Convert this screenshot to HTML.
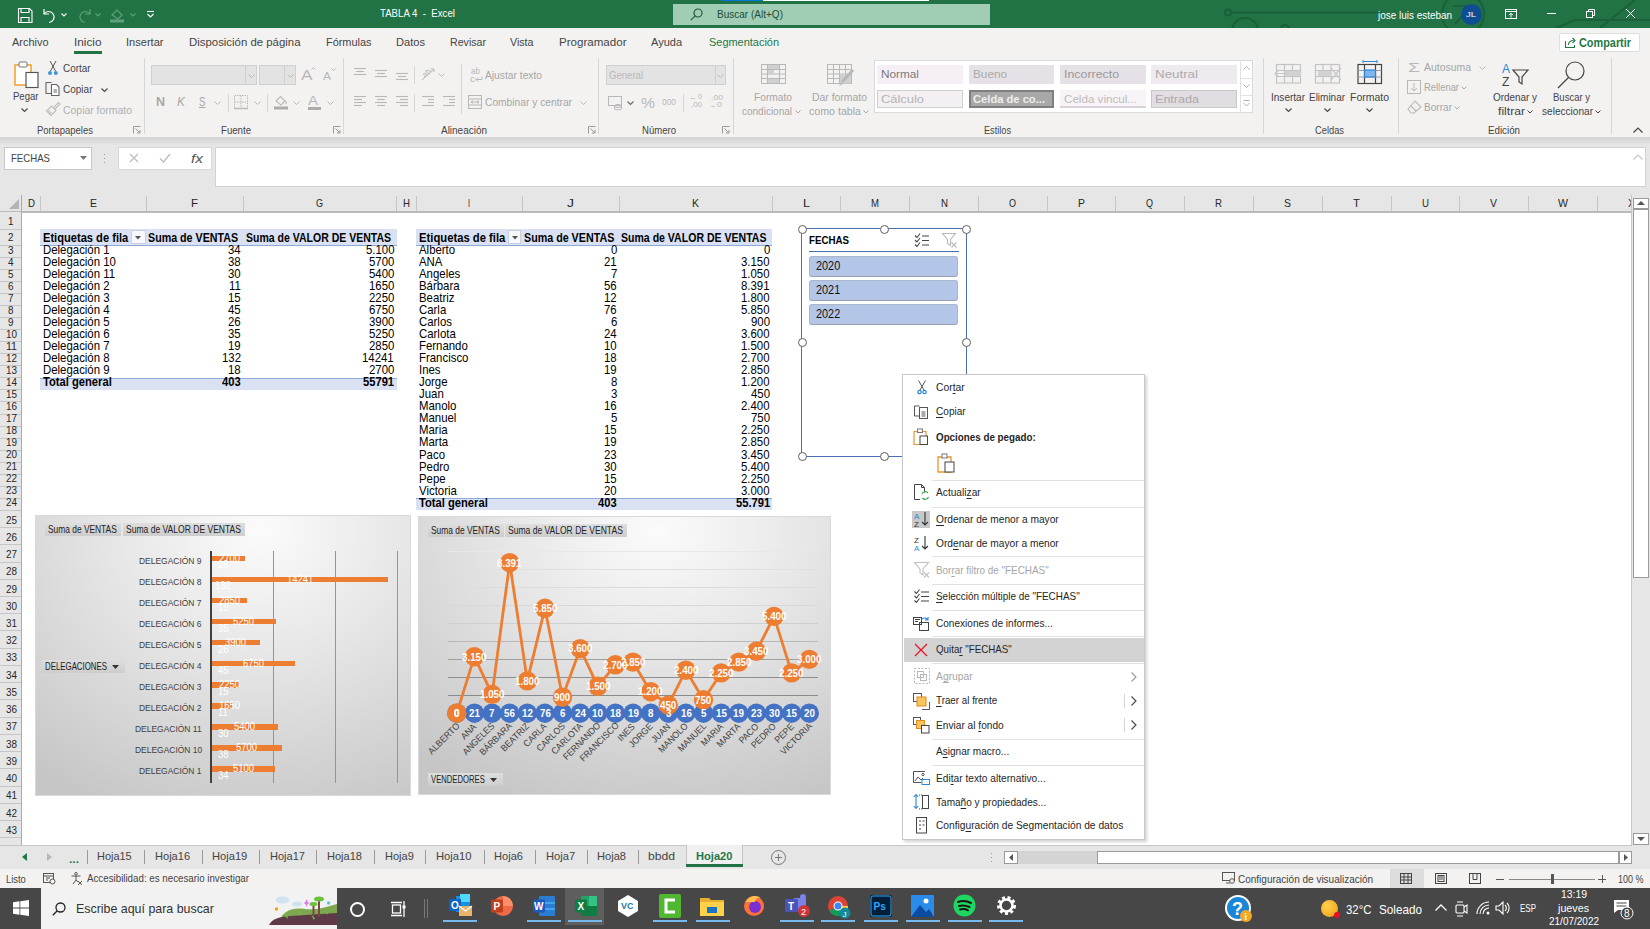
<!DOCTYPE html>
<html><head><meta charset="utf-8">
<style>
*{margin:0;padding:0;box-sizing:border-box}
html,body{width:1650px;height:929px;overflow:hidden;background:#fff;font-family:"Liberation Sans",sans-serif;color:#262626}
.a{position:absolute}
.t{position:absolute;white-space:nowrap;line-height:1}
svg{overflow:visible}
</style></head><body>
<div class="a" style="left:0.0px;top:0.0px;width:1650.0px;height:28.0px;background:#217346"></div>
<svg class="a" style="left:1150px;top:0px;" width="500" height="28" viewBox="0 0 500 28"><g stroke="#1a6139" stroke-width="2.2" fill="none"><line x1="81" y1="12.5" x2="232" y2="12.5"/><circle cx="78" cy="12.5" r="3"/><circle cx="95" cy="31" r="13"/><circle cx="135" cy="29" r="4"/><circle cx="313" cy="14" r="21"/><path d="M303 6h18l-16 18"/><path d="M406 28L425 20H500"/><path d="M450 28L485 0"/></g></svg>
<svg class="a" style="left:18px;top:8px;" width="15" height="15" viewBox="0 0 15 15"><g fill="none" stroke="#fff" stroke-width="1.1"><path d="M0.5 0.5h11l2.5 2.5v11.5h-13.5z"/><path d="M3 0.5v4h8v-4"/><path d="M3 14.5v-5h8v5"/></g></svg>
<svg class="a" style="left:43px;top:8px;" width="14" height="15" viewBox="0 0 14 15"><g fill="none" stroke="#fff" stroke-width="1.2"><path d="M1 6 A5.5 5.5 0 1 1 6 14.5"/><path d="M1 1v5h5"/></g></svg>
<svg class="a" style="left:61px;top:13px;" width="6" height="4" viewBox="0 0 6 4"><path d="M0.5 0.5L3 3L5.5 0.5" fill="none" stroke="#fff" stroke-width="1.1"/></svg>
<svg class="a" style="left:77px;top:8px;" width="14" height="15" viewBox="0 0 14 15"><g fill="none" stroke="#5ea17b" stroke-width="1.2"><path d="M13 6 A5.5 5.5 0 1 0 8 14.5"/><path d="M13 1v5h-5"/></g></svg>
<svg class="a" style="left:95px;top:13px;" width="6" height="4" viewBox="0 0 6 4"><path d="M0.5 0.5L3 3L5.5 0.5" fill="none" stroke="#5ea17b" stroke-width="1.1"/></svg>
<svg class="a" style="left:110px;top:8px;" width="14" height="15" viewBox="0 0 14 15"><g fill="none" stroke="#5ea17b" stroke-width="1.2"><path d="M2 7l5-5 5 5-4 4z"/></g><rect x="0" y="11.5" width="14" height="3" fill="#5ea17b"/></svg>
<svg class="a" style="left:130px;top:13px;" width="6" height="4" viewBox="0 0 6 4"><path d="M0.5 0.5L3 3L5.5 0.5" fill="none" stroke="#5ea17b" stroke-width="1.1"/></svg>
<svg class="a" style="left:147px;top:11px;" width="7" height="7" viewBox="0 0 7 7"><g fill="none" stroke="#fff" stroke-width="1.1"><path d="M0 0.5h7"/><path d="M0.5 3L3.5 6L6.5 3"/></g></svg>
<div class="t" style="left:380.0px;top:8.0px;font-size:11px;color:#fff;transform:scaleX(0.878);transform-origin:0 0;">TABLA 4  -  Excel</div>
<div class="a" style="left:722.0px;top:0.0px;width:41.0px;height:1.2px;background:#0078d4"></div>
<div class="a" style="left:763.0px;top:0.0px;width:166.0px;height:1.2px;background:#fff"></div>
<div class="a" style="left:673.0px;top:4.0px;width:317.0px;height:21.0px;background:#a0cdb4"></div>
<svg class="a" style="left:690px;top:8px;" width="13" height="13" viewBox="0 0 13 13"><g fill="none" stroke="#1e5c3a" stroke-width="1.2"><circle cx="8" cy="5" r="4"/><path d="M5.2 7.8L0.8 12.2"/></g></svg>
<div class="t" style="left:717.0px;top:9.0px;font-size:11px;color:#1e4d33;transform:scaleX(0.911);transform-origin:0 0;">Buscar (Alt+Q)</div>
<div class="t" style="left:1378.0px;top:9.5px;font-size:11px;color:#fff;transform:scaleX(0.903);transform-origin:0 0;">jose luis esteban</div>
<div class="a" style="left:1461px;top:4px;width:21px;height:21px;border-radius:50%;background:#0f4d92"></div>
<div class="t" style="left:1466.0px;top:10.5px;font-size:8px;color:#fff;transform:scaleX(1.184);transform-origin:0 0;">JL</div>
<svg class="a" style="left:1505px;top:9px;" width="12" height="10" viewBox="0 0 12 10"><g fill="none" stroke="#fff" stroke-width="1"><rect x="0.5" y="0.5" width="11" height="9"/><path d="M0.5 2.5h11"/><path d="M6 8.5V4.5M4 6.2L6 4.2 8 6.2"/></g></svg>
<div class="a" style="left:1547.0px;top:13.0px;width:9.0px;height:1.0px;background:#fff"></div>
<svg class="a" style="left:1586px;top:9px;" width="9" height="9" viewBox="0 0 9 9"><g fill="none" stroke="#fff" stroke-width="1"><rect x="0.5" y="2.5" width="6" height="6"/><path d="M2.5 2.5V0.5h6v6h-2"/></g></svg>
<svg class="a" style="left:1626px;top:9px;" width="9" height="9" viewBox="0 0 9 9"><g stroke="#fff" stroke-width="1"><path d="M0 0L9 9M9 0L0 9"/></g></svg>
<div class="a" style="left:0.0px;top:28.0px;width:1650.0px;height:110.0px;background:#f3f2f1"></div>
<div class="a" style="left:0.0px;top:137.0px;width:1650.0px;height:1.0px;background:#d6d6d6"></div>
<div class="t" style="left:12.0px;top:37.2px;font-size:11.5px;color:#444;transform:scaleX(0.952);transform-origin:0 0;">Archivo</div>
<div class="t" style="left:74.0px;top:37.2px;font-size:11.5px;color:#444;transform:scaleX(1.024);transform-origin:0 0;">Inicio</div>
<div class="t" style="left:125.5px;top:37.2px;font-size:11.5px;color:#444;transform:scaleX(0.962);transform-origin:0 0;">Insertar</div>
<div class="t" style="left:189.0px;top:37.2px;font-size:11.5px;color:#444;transform:scaleX(0.991);transform-origin:0 0;">Disposición de página</div>
<div class="t" style="left:325.5px;top:37.2px;font-size:11.5px;color:#444;transform:scaleX(0.949);transform-origin:0 0;">Fórmulas</div>
<div class="t" style="left:396.0px;top:37.2px;font-size:11.5px;color:#444;transform:scaleX(0.965);transform-origin:0 0;">Datos</div>
<div class="t" style="left:449.5px;top:37.2px;font-size:11.5px;color:#444;transform:scaleX(0.924);transform-origin:0 0;">Revisar</div>
<div class="t" style="left:509.5px;top:37.2px;font-size:11.5px;color:#444;transform:scaleX(0.927);transform-origin:0 0;">Vista</div>
<div class="t" style="left:558.5px;top:37.2px;font-size:11.5px;color:#444;transform:scaleX(1.006);transform-origin:0 0;">Programador</div>
<div class="t" style="left:651.0px;top:37.2px;font-size:11.5px;color:#444;transform:scaleX(0.957);transform-origin:0 0;">Ayuda</div>
<div class="t" style="left:709.0px;top:37.2px;font-size:11.5px;color:#1d7845;transform:scaleX(0.952);transform-origin:0 0;">Segmentación</div>
<div class="a" style="left:74.0px;top:51.0px;width:28.0px;height:3.0px;background:#217346"></div>
<div class="a" style="left:1558.5px;top:33.0px;width:81.0px;height:19.0px;background:#fff;border:1px solid #e1dfdd;border-radius:2px"></div>
<svg class="a" style="left:1565px;top:37px;" width="11" height="11" viewBox="0 0 11 11"><g fill="none" stroke="#1d7845" stroke-width="1.1"><path d="M0.5 4v6.5h9V8"/><path d="M3.5 8c0-3 2-4.5 5-4.5"/><path d="M7.5 1L10 3.5 7.5 6"/></g></svg>
<div class="t" style="left:1579.0px;top:36.5px;font-size:12px;font-weight:bold;color:#1d7845;transform:scaleX(0.907);transform-origin:0 0;">Compartir</div>
<div class="a" style="left:144.0px;top:58.0px;width:1.0px;height:76.0px;background:#d6d6d6"></div>
<div class="a" style="left:343.0px;top:58.0px;width:1.0px;height:76.0px;background:#d6d6d6"></div>
<div class="a" style="left:597.5px;top:58.0px;width:1.0px;height:76.0px;background:#d6d6d6"></div>
<div class="a" style="left:732.5px;top:58.0px;width:1.0px;height:76.0px;background:#d6d6d6"></div>
<div class="a" style="left:1262.5px;top:58.0px;width:1.0px;height:76.0px;background:#d6d6d6"></div>
<div class="a" style="left:1397.5px;top:58.0px;width:1.0px;height:76.0px;background:#d6d6d6"></div>
<div class="a" style="left:1611.0px;top:58.0px;width:1.0px;height:76.0px;background:#d6d6d6"></div>
<div class="t" style="left:37.0px;top:125.0px;font-size:11px;color:#444;transform:scaleX(0.864);transform-origin:0 0;">Portapapeles</div>
<div class="t" style="left:221.0px;top:125.0px;font-size:11px;color:#444;transform:scaleX(0.876);transform-origin:0 0;">Fuente</div>
<div class="t" style="left:441.0px;top:125.0px;font-size:11px;color:#444;transform:scaleX(0.906);transform-origin:0 0;">Alineación</div>
<div class="t" style="left:642.0px;top:125.0px;font-size:11px;color:#444;transform:scaleX(0.869);transform-origin:0 0;">Número</div>
<div class="t" style="left:984.0px;top:125.0px;font-size:11px;color:#444;transform:scaleX(0.833);transform-origin:0 0;">Estilos</div>
<div class="t" style="left:1315.0px;top:125.0px;font-size:11px;color:#444;transform:scaleX(0.847);transform-origin:0 0;">Celdas</div>
<div class="t" style="left:1488.0px;top:125.0px;font-size:11px;color:#444;transform:scaleX(0.887);transform-origin:0 0;">Edición</div>
<svg class="a" style="left:133px;top:126px;" width="8" height="8" viewBox="0 0 8 8"><g fill="none" stroke="#9a9a9a" stroke-width="1"><path d="M0.5 7.5V0.5h7"/><path d="M2.5 2.5L7 7M7 4v3h-3"/></g></svg>
<svg class="a" style="left:333px;top:126px;" width="8" height="8" viewBox="0 0 8 8"><g fill="none" stroke="#9a9a9a" stroke-width="1"><path d="M0.5 7.5V0.5h7"/><path d="M2.5 2.5L7 7M7 4v3h-3"/></g></svg>
<svg class="a" style="left:588px;top:126px;" width="8" height="8" viewBox="0 0 8 8"><g fill="none" stroke="#9a9a9a" stroke-width="1"><path d="M0.5 7.5V0.5h7"/><path d="M2.5 2.5L7 7M7 4v3h-3"/></g></svg>
<svg class="a" style="left:722px;top:126px;" width="8" height="8" viewBox="0 0 8 8"><g fill="none" stroke="#9a9a9a" stroke-width="1"><path d="M0.5 7.5V0.5h7"/><path d="M2.5 2.5L7 7M7 4v3h-3"/></g></svg>
<svg class="a" style="left:1633px;top:127px;" width="10" height="6" viewBox="0 0 10 6"><path d="M0.5 5.5L5 1L9.5 5.5" fill="none" stroke="#444" stroke-width="1.2"/></svg>
<svg class="a" style="left:14px;top:61px;" width="27" height="28" viewBox="0 0 27 28"><rect x="1" y="4" width="16" height="20" fill="#fff" stroke="#f0a030" stroke-width="1.5"/><rect x="5" y="1" width="8" height="5" rx="1" fill="#fff" stroke="#777" stroke-width="1"/><rect x="12" y="11.5" width="12" height="15" fill="#fff" stroke="#555" stroke-width="1.2"/></svg>
<div class="t" style="left:12.5px;top:91.2px;font-size:11.5px;color:#444;transform:scaleX(0.831);transform-origin:0 0;">Pegar</div>
<svg class="a" style="left:21px;top:108px;" width="7" height="4" viewBox="0 0 7 4"><path d="M0.5 0.5L3.5 3.5L6.5 0.5" fill="none" stroke="#444" stroke-width="1.1"/></svg>
<svg class="a" style="left:47px;top:60px;" width="12" height="16" viewBox="0 0 12 16"><g fill="none" stroke="#555" stroke-width="1"><path d="M3 1L8.5 11M9 1L3.5 11"/></g><circle cx="3" cy="13" r="2" fill="#3a96dd"/><circle cx="8.8" cy="13" r="2" fill="#3a96dd"/></svg>
<div class="t" style="left:62.5px;top:62.8px;font-size:11.5px;color:#444;transform:scaleX(0.861);transform-origin:0 0;">Cortar</div>
<svg class="a" style="left:45px;top:81px;" width="16" height="16" viewBox="0 0 16 16"><g fill="none" stroke="#666" stroke-width="1.1"><path d="M6 12.5H1V1.5h5.5"/><path d="M6.5 3.5h5l2.5 2.5v8.5h-7.5z" fill="#fff"/><path d="M8.5 9h3.5M8.5 11h3.5"/></g></svg>
<div class="t" style="left:62.5px;top:83.8px;font-size:11.5px;color:#444;transform:scaleX(0.871);transform-origin:0 0;">Copiar</div>
<svg class="a" style="left:101px;top:88px;" width="7" height="4" viewBox="0 0 7 4"><path d="M0.5 0.5L3.5 3.5L6.5 0.5" fill="none" stroke="#444" stroke-width="1.1"/></svg>
<svg class="a" style="left:45px;top:101px;" width="16" height="16" viewBox="0 0 16 16"><g fill="none" stroke="#bdbdbd" stroke-width="1.1"><path d="M1.5 10l5-5 4.5 4.5-5 5z"/><path d="M8.5 6.5l5-5 1.5 1.5-5 5"/><path d="M3 11.5l2-2M4.5 13l2-2"/></g></svg>
<div class="t" style="left:62.5px;top:104.8px;font-size:11.5px;color:#b0b0b0;transform:scaleX(0.907);transform-origin:0 0;">Copiar formato</div>
<div class="a" style="left:151.0px;top:65.0px;width:105.5px;height:20.0px;background:#e3e3e3;border:1px solid #d0d0d0"></div>
<div class="a" style="left:245.0px;top:66.0px;width:1.0px;height:18.0px;background:#d0d0d0"></div>
<div class="a" style="left:259.0px;top:65.0px;width:36.5px;height:20.0px;background:#e3e3e3;border:1px solid #d0d0d0"></div>
<div class="a" style="left:284.0px;top:66.0px;width:1.0px;height:18.0px;background:#d0d0d0"></div>
<svg class="a" style="left:248px;top:74px;" width="7" height="4" viewBox="0 0 7 4"><path d="M0.5 0.5L3.5 3.5L6.5 0.5" fill="none" stroke="#b8b8b8" stroke-width="1"/></svg>
<svg class="a" style="left:287px;top:74px;" width="7" height="4" viewBox="0 0 7 4"><path d="M0.5 0.5L3.5 3.5L6.5 0.5" fill="none" stroke="#b8b8b8" stroke-width="1"/></svg>
<div class="t" style="left:300.5px;top:68.0px;font-size:14px;color:#b8b8b8;transform:scaleX(1.231);transform-origin:0 0;">A</div>
<svg class="a" style="left:311px;top:67px;" width="5" height="3" viewBox="0 0 5 3"><path d="M0.5 2.5L2.5 0.5L4.5 2.5" fill="none" stroke="#b8b8b8" stroke-width="1"/></svg>
<div class="t" style="left:323.0px;top:70.5px;font-size:11px;color:#b8b8b8;transform:scaleX(1.090);transform-origin:0 0;">A</div>
<svg class="a" style="left:331px;top:68px;" width="5" height="3" viewBox="0 0 5 3"><path d="M0.5 0.5L2.5 2.5L4.5 0.5" fill="none" stroke="#b8b8b8" stroke-width="1"/></svg>
<div class="t" style="left:155.5px;top:96.0px;font-size:12px;font-weight:bold;color:#a8a8a8;transform:scaleX(1.039);transform-origin:0 0;">N</div>
<div class="t" style="left:177.0px;top:96.0px;font-size:12px;color:#a8a8a8;transform:scaleX(0.999);transform-origin:0 0;font-style:italic">K</div>
<div class="t" style="left:198.5px;top:95.5px;font-size:12px;color:#a8a8a8;transform:scaleX(0.812);transform-origin:0 0;text-decoration:underline">S</div>
<svg class="a" style="left:214px;top:101px;" width="7" height="4" viewBox="0 0 7 4"><path d="M0.5 0.5L3.5 3.5L6.5 0.5" fill="none" stroke="#b8b8b8" stroke-width="1"/></svg>
<div class="a" style="left:228.0px;top:94.0px;width:1.0px;height:18.0px;background:#d6d6d6"></div>
<svg class="a" style="left:234px;top:95px;" width="14" height="14" viewBox="0 0 14 14"><g fill="none" stroke="#b8b8b8" stroke-width="1" stroke-dasharray="1.5 1"><rect x="0.5" y="0.5" width="13" height="13"/><path d="M7 0.5v13M0.5 7h13"/></g><path d="M0 13.5h14" stroke="#b8b8b8" stroke-width="1.5"/></svg>
<svg class="a" style="left:254px;top:101px;" width="7" height="4" viewBox="0 0 7 4"><path d="M0.5 0.5L3.5 3.5L6.5 0.5" fill="none" stroke="#b8b8b8" stroke-width="1"/></svg>
<div class="a" style="left:267.0px;top:94.0px;width:1.0px;height:18.0px;background:#d6d6d6"></div>
<svg class="a" style="left:274px;top:95px;" width="14" height="16" viewBox="0 0 14 16"><g fill="none" stroke="#b8b8b8" stroke-width="1.1"><path d="M2 6l4.5-4.5L11 6l-4 4z"/><path d="M11 6c1.5 1 1.5 2.5 0.5 3"/></g><rect x="0" y="11.5" width="14" height="3" fill="#b0aba8"/></svg>
<svg class="a" style="left:293px;top:101px;" width="7" height="4" viewBox="0 0 7 4"><path d="M0.5 0.5L3.5 3.5L6.5 0.5" fill="none" stroke="#b8b8b8" stroke-width="1"/></svg>
<div class="t" style="left:308.0px;top:93.5px;font-size:13px;color:#b8b8b8;transform:scaleX(1.153);transform-origin:0 0;">A</div>
<div class="a" style="left:308.0px;top:107.0px;width:13.0px;height:3.0px;background:#b0aba8"></div>
<svg class="a" style="left:327px;top:101px;" width="7" height="4" viewBox="0 0 7 4"><path d="M0.5 0.5L3.5 3.5L6.5 0.5" fill="none" stroke="#b8b8b8" stroke-width="1"/></svg>
<svg class="a" style="left:353px;top:67px;" width="14" height="14" viewBox="0 0 14 14"><path d="M1 1.5H13" stroke="#b8b8b8" stroke-width="1.1"/><path d="M3 4.5H11" stroke="#b8b8b8" stroke-width="1.1"/><path d="M1 7.5H13" stroke="#b8b8b8" stroke-width="1.1"/></svg>
<svg class="a" style="left:374px;top:69px;" width="14" height="14" viewBox="0 0 14 14"><path d="M1 1.5H13" stroke="#b8b8b8" stroke-width="1.1"/><path d="M3 4.5H11" stroke="#b8b8b8" stroke-width="1.1"/><path d="M1 7.5H13" stroke="#b8b8b8" stroke-width="1.1"/></svg>
<svg class="a" style="left:395px;top:72px;" width="14" height="14" viewBox="0 0 14 14"><path d="M1 1.5H13" stroke="#b8b8b8" stroke-width="1.1"/><path d="M3 4.5H11" stroke="#b8b8b8" stroke-width="1.1"/><path d="M1 7.5H13" stroke="#b8b8b8" stroke-width="1.1"/></svg>
<div class="a" style="left:414.0px;top:66.0px;width:1.0px;height:18.0px;background:#d6d6d6"></div>
<svg class="a" style="left:421px;top:67px;" width="15" height="14" viewBox="0 0 15 14"><g fill="none" stroke="#b8b8b8" stroke-width="1"><path d="M1 13L13 2M10 2h3v3"/></g><text x="1" y="9" font-size="8" fill="#b8b8b8" transform="rotate(-40 5 6)">ab</text></svg>
<svg class="a" style="left:438px;top:73px;" width="7" height="4" viewBox="0 0 7 4"><path d="M0.5 0.5L3.5 3.5L6.5 0.5" fill="none" stroke="#b8b8b8" stroke-width="1"/></svg>
<div class="a" style="left:461.0px;top:64.0px;width:1.0px;height:50.0px;background:#d6d6d6"></div>
<div class="t" style="left:471.0px;top:66.8px;font-size:8.5px;color:#b8b8b8;transform:scaleX(0.952);transform-origin:0 0;">ab</div>
<div class="t" style="left:470.0px;top:74.8px;font-size:8.5px;color:#b8b8b8;transform:scaleX(1.176);transform-origin:0 0;">c</div>
<svg class="a" style="left:475px;top:76px;" width="8" height="6" viewBox="0 0 8 6"><path d="M7 0.5v3H1M3 1.5L1 3.5 3 5.5" fill="none" stroke="#b8b8b8" stroke-width="1"/></svg>
<div class="t" style="left:485.0px;top:69.8px;font-size:11.5px;color:#a6a6a6;transform:scaleX(0.892);transform-origin:0 0;">Ajustar texto</div>
<svg class="a" style="left:353px;top:95px;" width="14" height="14" viewBox="0 0 14 14"><path d="M1 1.5H13" stroke="#b8b8b8" stroke-width="1.1"/><path d="M1 4.5H9" stroke="#b8b8b8" stroke-width="1.1"/><path d="M1 7.5H13" stroke="#b8b8b8" stroke-width="1.1"/><path d="M1 10.5H9" stroke="#b8b8b8" stroke-width="1.1"/></svg>
<svg class="a" style="left:374px;top:95px;" width="14" height="14" viewBox="0 0 14 14"><path d="M1 1.5H13" stroke="#b8b8b8" stroke-width="1.1"/><path d="M3 4.5H11" stroke="#b8b8b8" stroke-width="1.1"/><path d="M1 7.5H13" stroke="#b8b8b8" stroke-width="1.1"/><path d="M3 10.5H11" stroke="#b8b8b8" stroke-width="1.1"/></svg>
<svg class="a" style="left:395px;top:95px;" width="14" height="14" viewBox="0 0 14 14"><path d="M1 1.5H13" stroke="#b8b8b8" stroke-width="1.1"/><path d="M5 4.5H13" stroke="#b8b8b8" stroke-width="1.1"/><path d="M1 7.5H13" stroke="#b8b8b8" stroke-width="1.1"/><path d="M5 10.5H13" stroke="#b8b8b8" stroke-width="1.1"/></svg>
<div class="a" style="left:414.0px;top:94.0px;width:1.0px;height:18.0px;background:#d6d6d6"></div>
<svg class="a" style="left:421px;top:95px;" width="14" height="14" viewBox="0 0 14 14"><path d="M1 1.5H13" stroke="#b8b8b8" stroke-width="1.1"/><path d="M7 4.5H13" stroke="#b8b8b8" stroke-width="1.1"/><path d="M7 7.5H13" stroke="#b8b8b8" stroke-width="1.1"/><path d="M1 10.5H13" stroke="#b8b8b8" stroke-width="1.1"/></svg>
<svg class="a" style="left:442px;top:95px;" width="14" height="14" viewBox="0 0 14 14"><path d="M1 1.5H13" stroke="#b8b8b8" stroke-width="1.1"/><path d="M7 4.5H13" stroke="#b8b8b8" stroke-width="1.1"/><path d="M7 7.5H13" stroke="#b8b8b8" stroke-width="1.1"/><path d="M1 10.5H13" stroke="#b8b8b8" stroke-width="1.1"/></svg>
<svg class="a" style="left:468px;top:95px;" width="14" height="14" viewBox="0 0 14 14"><g fill="none" stroke="#b8b8b8" stroke-width="1"><rect x="0.5" y="0.5" width="13" height="13"/><path d="M0.5 4h13M0.5 10h13M3 7h8M5 5.5L3 7 5 8.5M9 5.5L11 7 9 8.5"/></g></svg>
<div class="t" style="left:485.0px;top:97.2px;font-size:11.5px;color:#a6a6a6;transform:scaleX(0.890);transform-origin:0 0;">Combinar y centrar</div>
<svg class="a" style="left:580px;top:101px;" width="7" height="4" viewBox="0 0 7 4"><path d="M0.5 0.5L3.5 3.5L6.5 0.5" fill="none" stroke="#b8b8b8" stroke-width="1"/></svg>
<div class="a" style="left:606.0px;top:65.0px;width:120.0px;height:20.0px;background:#e3e3e3;border:1px solid #d0d0d0"></div>
<div class="a" style="left:714.5px;top:66.0px;width:1.0px;height:18.0px;background:#d0d0d0"></div>
<div class="t" style="left:609.0px;top:69.8px;font-size:11.5px;color:#b8b8b8;transform:scaleX(0.831);transform-origin:0 0;">General</div>
<svg class="a" style="left:717px;top:74px;" width="7" height="4" viewBox="0 0 7 4"><path d="M0.5 0.5L3.5 3.5L6.5 0.5" fill="none" stroke="#b8b8b8" stroke-width="1"/></svg>
<svg class="a" style="left:608px;top:96px;" width="15" height="14" viewBox="0 0 15 14"><g fill="none" stroke="#b8b8b8" stroke-width="1"><rect x="0.5" y="0.5" width="13" height="9"/><ellipse cx="10" cy="10" rx="3.5" ry="1.5"/><path d="M6.5 10v3c0 1 7 1 7 0v-3"/></g></svg>
<svg class="a" style="left:627px;top:101px;" width="7" height="4" viewBox="0 0 7 4"><path d="M0.5 0.5L3.5 3.5L6.5 0.5" fill="none" stroke="#666" stroke-width="1.1"/></svg>
<div class="t" style="left:641.0px;top:94.5px;font-size:15px;color:#b8b8b8;transform:scaleX(1.050);transform-origin:0 0;">%</div>
<div class="t" style="left:662.0px;top:98.0px;font-size:9px;color:#b8b8b8;transform:scaleX(0.932);transform-origin:0 0;">000</div>
<div class="a" style="left:683.0px;top:94.0px;width:1.0px;height:18.0px;background:#d6d6d6"></div>
<div class="t" style="left:689.0px;top:93.0px;font-size:9px;color:#b8b8b8;transform:scaleX(0.889);transform-origin:0 0;">←</div>
<div class="t" style="left:698.0px;top:93.0px;font-size:8px;color:#b8b8b8;transform:scaleX(0.899);transform-origin:0 0;">0</div>
<div class="t" style="left:691.0px;top:101.0px;font-size:8px;color:#b8b8b8;transform:scaleX(0.989);transform-origin:0 0;">,00</div>
<div class="t" style="left:711.0px;top:93.5px;font-size:8px;color:#b8b8b8;transform:scaleX(1.079);transform-origin:0 0;">,00</div>
<div class="t" style="left:709.0px;top:100.5px;font-size:9px;color:#b8b8b8;transform:scaleX(0.778);transform-origin:0 0;">→</div>
<div class="t" style="left:717.0px;top:101.0px;font-size:8px;color:#b8b8b8;transform:scaleX(1.124);transform-origin:0 0;">0</div>
<svg class="a" style="left:761px;top:64px;" width="26" height="20" viewBox="0 0 26 20"><g fill="none" stroke="#b8b8b8" stroke-width="1"><rect x="0.5" y="0.5" width="24" height="19"/><path d="M6.5 0.5v19M18.5 0.5v19M0.5 5.5h24M0.5 10h24M0.5 14.5h24"/></g><rect x="7" y="1" width="11" height="4" fill="#d0d0d0"/><rect x="7" y="6" width="6" height="4" fill="#d0d0d0"/><rect x="7" y="15" width="11" height="4" fill="#d0d0d0"/></svg>
<div class="t" style="left:754.0px;top:91.8px;font-size:11.5px;color:#a6a6a6;transform:scaleX(0.888);transform-origin:0 0;">Formato</div>
<div class="t" style="left:742.0px;top:105.8px;font-size:11.5px;color:#a6a6a6;transform:scaleX(0.869);transform-origin:0 0;">condicional</div>
<svg class="a" style="left:795px;top:110px;" width="6" height="4" viewBox="0 0 6 4"><path d="M0.5 0.5L3 3L5.5 0.5" fill="none" stroke="#a6a6a6" stroke-width="1"/></svg>
<svg class="a" style="left:827px;top:64px;" width="28" height="24" viewBox="0 0 28 24"><g fill="none" stroke="#b8b8b8" stroke-width="1"><rect x="0.5" y="0.5" width="24" height="19"/><path d="M6.5 0.5v19M12.5 0.5v19M18.5 0.5v19M0.5 5.5h24M0.5 10h24M0.5 14.5h24"/></g><rect x="13" y="10.5" width="11" height="9" fill="#d0d0d0"/><path d="M26 6L15 18" stroke="#b8b8b8" stroke-width="3"/><path d="M14 18l-2 4 4-2z" fill="#b8b8b8"/></svg>
<div class="t" style="left:812.0px;top:91.8px;font-size:11.5px;color:#a6a6a6;transform:scaleX(0.906);transform-origin:0 0;">Dar formato</div>
<div class="t" style="left:809.0px;top:105.8px;font-size:11.5px;color:#a6a6a6;transform:scaleX(0.924);transform-origin:0 0;">como tabla</div>
<svg class="a" style="left:863px;top:110px;" width="6" height="4" viewBox="0 0 6 4"><path d="M0.5 0.5L3 3L5.5 0.5" fill="none" stroke="#a6a6a6" stroke-width="1"/></svg>
<div class="a" style="left:873.5px;top:60.0px;width:379.0px;height:53.0px;background:#fff;border:1px solid #dadada"></div>
<div class="a" style="left:1240.0px;top:60.0px;width:1.0px;height:53.0px;background:#e1e1e1"></div>
<div class="a" style="left:1241.0px;top:78.0px;width:11.0px;height:1.0px;background:#e1e1e1"></div>
<div class="a" style="left:1241.0px;top:95.0px;width:11.0px;height:1.0px;background:#e1e1e1"></div>
<svg class="a" style="left:1243px;top:66px;" width="7" height="4" viewBox="0 0 7 4"><path d="M0.5 3.5L3.5 0.5L6.5 3.5" fill="none" stroke="#b0b0b0" stroke-width="1"/></svg>
<svg class="a" style="left:1243px;top:84px;" width="7" height="4" viewBox="0 0 7 4"><path d="M0.5 0.5L3.5 3.5L6.5 0.5" fill="none" stroke="#b0b0b0" stroke-width="1"/></svg>
<svg class="a" style="left:1243px;top:100px;" width="7" height="7" viewBox="0 0 7 7"><path d="M0.5 0.5h6M0.5 3L3.5 6 6.5 3" fill="none" stroke="#b0b0b0" stroke-width="1"/></svg>
<div class="a" style="left:877.0px;top:65.0px;width:86.0px;height:19.0px;background:#f6f0f6"></div>
<div class="t" style="left:881.0px;top:69.2px;font-size:11.5px;color:#7a7a7a;transform:scaleX(1.025);transform-origin:0 0;">Normal</div>
<div class="a" style="left:968.5px;top:65.0px;width:85.5px;height:19.0px;background:#e6e1e6"></div>
<div class="t" style="left:972.5px;top:69.2px;font-size:11.5px;color:#aaa;transform:scaleX(1.023);transform-origin:0 0;">Bueno</div>
<div class="a" style="left:1059.5px;top:65.0px;width:86.0px;height:19.0px;background:#e6e1e6"></div>
<div class="t" style="left:1063.5px;top:69.2px;font-size:11.5px;color:#999;transform:scaleX(1.076);transform-origin:0 0;">Incorrecto</div>
<div class="a" style="left:1150.5px;top:65.0px;width:86.0px;height:19.0px;background:#efeaf0"></div>
<div class="t" style="left:1154.5px;top:69.2px;font-size:11.5px;color:#aaa;transform:scaleX(1.160);transform-origin:0 0;">Neutral</div>
<div class="a" style="left:877.0px;top:90.0px;width:86.0px;height:18.0px;background:#f3eff3;border:1px solid #cfcfcf"></div>
<div class="t" style="left:881.0px;top:93.8px;font-size:11.5px;color:#b4b4b4;transform:scaleX(1.121);transform-origin:0 0;">Cálculo</div>
<div class="a" style="left:968.5px;top:90.0px;width:85.5px;height:18.0px;background:#a8a8a8;border:2px solid #7f7f7f"></div>
<div class="t" style="left:972.5px;top:93.8px;font-size:11.5px;font-weight:bold;color:#eee;transform:scaleX(0.971);transform-origin:0 0;">Celda de co...</div>
<div class="a" style="left:1059.5px;top:90.0px;width:86.0px;height:18.0px;background:#f7f3f7;border-bottom:2px solid #d9d2d9"></div>
<div class="t" style="left:1063.5px;top:93.8px;font-size:11.5px;color:#bbb;transform:scaleX(1.011);transform-origin:0 0;">Celda vincul...</div>
<div class="a" style="left:1150.5px;top:90.0px;width:86.0px;height:18.0px;background:#e2dde2;border:1px solid #c9c9c9"></div>
<div class="t" style="left:1154.5px;top:93.8px;font-size:11.5px;color:#aaa;transform:scaleX(1.092);transform-origin:0 0;">Entrada</div>
<svg class="a" style="left:1274px;top:64px;" width="28" height="20" viewBox="0 0 28 20"><g fill="none" stroke="#c4c4c4" stroke-width="1.2"><rect x="2.5" y="0.5" width="24" height="18.5"/><path d="M10.5 0.5v18.5M18.5 0.5v18.5M2.5 6.5h24M2.5 12.5h24"/></g><rect x="11" y="7" width="16" height="5" fill="#d2d2d2"/><path d="M1 9.5h13M5 6L1 9.5 5 13" fill="none" stroke="#c8c8c8" stroke-width="1.2"/></svg>
<div class="t" style="left:1271.0px;top:91.8px;font-size:11.5px;color:#444;transform:scaleX(0.872);transform-origin:0 0;">Insertar</div>
<svg class="a" style="left:1285px;top:108px;" width="7" height="4" viewBox="0 0 7 4"><path d="M0.5 0.5L3.5 3.5L6.5 0.5" fill="none" stroke="#444" stroke-width="1.1"/></svg>
<svg class="a" style="left:1315px;top:64px;" width="28" height="20" viewBox="0 0 28 20"><g fill="none" stroke="#c4c4c4" stroke-width="1.2"><rect x="0.5" y="0.5" width="24" height="18.5"/><path d="M8 0.5v18.5M16 0.5v18.5M0.5 6.5h24M0.5 12.5h24"/></g><rect x="3" y="7" width="13" height="5" fill="#d2d2d2"/><path d="M16 4l10 12M26 4L16 16" stroke="#c8c8c8" stroke-width="1.2"/></svg>
<div class="t" style="left:1309.0px;top:91.8px;font-size:11.5px;color:#444;transform:scaleX(0.867);transform-origin:0 0;">Eliminar</div>
<svg class="a" style="left:1324px;top:108px;" width="7" height="4" viewBox="0 0 7 4"><path d="M0.5 0.5L3.5 3.5L6.5 0.5" fill="none" stroke="#444" stroke-width="1.1"/></svg>
<svg class="a" style="left:1357px;top:60px;" width="26" height="25" viewBox="0 0 26 25"><path d="M6 1.5h14M6 0v3M20 0v3" stroke="#2b88d8" stroke-width="1"/><g fill="none" stroke="#444" stroke-width="1.2"><rect x="1" y="4.5" width="23.5" height="19"/><path d="M7.5 4.5v19M18.5 4.5v19"/></g><g stroke="#9a9a9a" stroke-width="1"><path d="M1 10.5h23.5M1 17h23.5"/></g><rect x="7.5" y="10" width="11" height="7" fill="#7fb5e8" stroke="#2b88d8" stroke-width="1.2"/></svg>
<div class="t" style="left:1350.0px;top:91.8px;font-size:11.5px;color:#444;transform:scaleX(0.911);transform-origin:0 0;">Formato</div>
<svg class="a" style="left:1366px;top:108px;" width="7" height="4" viewBox="0 0 7 4"><path d="M0.5 0.5L3.5 3.5L6.5 0.5" fill="none" stroke="#444" stroke-width="1.1"/></svg>
<div class="t" style="left:1408.0px;top:61.0px;font-size:13px;color:#b8b8b8;transform:scaleX(1.493);transform-origin:0 0;">Σ</div>
<div class="t" style="left:1424.0px;top:62.2px;font-size:11.5px;color:#a6a6a6;transform:scaleX(0.908);transform-origin:0 0;">Autosuma</div>
<svg class="a" style="left:1479px;top:66px;" width="7" height="4" viewBox="0 0 7 4"><path d="M0.5 0.5L3.5 3.5L6.5 0.5" fill="none" stroke="#b8b8b8" stroke-width="1"/></svg>
<svg class="a" style="left:1407px;top:80px;" width="14" height="14" viewBox="0 0 14 14"><g fill="none" stroke="#b8b8b8" stroke-width="1"><rect x="0.5" y="0.5" width="13" height="13"/><path d="M7 3v8M4 8l3 3 3-3"/></g></svg>
<div class="t" style="left:1424.0px;top:81.8px;font-size:11.5px;color:#a6a6a6;transform:scaleX(0.817);transform-origin:0 0;">Rellenar</div>
<svg class="a" style="left:1461px;top:86px;" width="6" height="4" viewBox="0 0 6 4"><path d="M0.5 0.5L3 3L5.5 0.5" fill="none" stroke="#a6a6a6" stroke-width="1"/></svg>
<svg class="a" style="left:1407px;top:100px;" width="15" height="14" viewBox="0 0 15 14"><g fill="none" stroke="#b8b8b8" stroke-width="1.1"><path d="M1 9l7-8 6 6-7 6H4z"/><path d="M4 6l5 5"/></g></svg>
<div class="t" style="left:1424.0px;top:101.8px;font-size:11.5px;color:#a6a6a6;transform:scaleX(0.876);transform-origin:0 0;">Borrar</div>
<svg class="a" style="left:1454px;top:106px;" width="6" height="4" viewBox="0 0 6 4"><path d="M0.5 0.5L3 3L5.5 0.5" fill="none" stroke="#a6a6a6" stroke-width="1"/></svg>
<svg class="a" style="left:1502px;top:62px;" width="28" height="26" viewBox="0 0 28 26"><text x="0" y="11" font-size="12" fill="#2b88d8" font-family="Liberation Sans">A</text><text x="0" y="24" font-size="12" fill="#444" font-family="Liberation Sans">Z</text><path d="M11 8h15l-6 7v7l-3-2v-5z" fill="none" stroke="#444" stroke-width="1.2"/></svg>
<div class="t" style="left:1493.0px;top:91.8px;font-size:11.5px;color:#444;transform:scaleX(0.861);transform-origin:0 0;">Ordenar y</div>
<div class="t" style="left:1498.0px;top:105.8px;font-size:11.5px;color:#444;transform:scaleX(1.057);transform-origin:0 0;">filtrar</div>
<svg class="a" style="left:1527px;top:110px;" width="6" height="4" viewBox="0 0 6 4"><path d="M0.5 0.5L3 3L5.5 0.5" fill="none" stroke="#444" stroke-width="1"/></svg>
<svg class="a" style="left:1557px;top:61px;" width="29" height="28" viewBox="0 0 29 28"><g fill="none" stroke="#444" stroke-width="1.2"><circle cx="18" cy="10" r="9"/><path d="M11.5 16.5L1 27"/></g></svg>
<div class="t" style="left:1553.0px;top:91.8px;font-size:11.5px;color:#444;transform:scaleX(0.827);transform-origin:0 0;">Buscar y</div>
<div class="t" style="left:1542.0px;top:105.8px;font-size:11.5px;color:#444;transform:scaleX(0.877);transform-origin:0 0;">seleccionar</div>
<svg class="a" style="left:1595px;top:110px;" width="6" height="4" viewBox="0 0 6 4"><path d="M0.5 0.5L3 3L5.5 0.5" fill="none" stroke="#444" stroke-width="1"/></svg>
<div class="a" style="left:0.0px;top:138.0px;width:1650.0px;height:57.0px;background:#e6e6e6"></div>
<div class="a" style="left:0.0px;top:138.0px;width:1650.0px;height:7.0px;background:linear-gradient(#d4d4d4,#e6e6e6)"></div>
<div class="a" style="left:4.0px;top:147.0px;width:88.0px;height:22.5px;background:#fff;border:1px solid #c8c8c8"></div>
<div class="t" style="left:11.0px;top:152.8px;font-size:11.5px;color:#444;transform:scaleX(0.836);transform-origin:0 0;">FECHAS</div>
<svg class="a" style="left:80px;top:156px;" width="7" height="4" viewBox="0 0 7 4"><path d="M0 0h7L3.5 4z" fill="#777"/></svg>
<div class="a" style="left:104.0px;top:153.5px;width:1.0px;height:1.2px;background:#9a9a9a"></div>
<div class="a" style="left:104.0px;top:157.5px;width:1.0px;height:1.2px;background:#9a9a9a"></div>
<div class="a" style="left:104.0px;top:161.5px;width:1.0px;height:1.2px;background:#9a9a9a"></div>
<div class="a" style="left:118.0px;top:147.0px;width:93.5px;height:22.5px;background:#fff;border:1px solid #d8d8d8"></div>
<svg class="a" style="left:129px;top:153px;" width="10" height="10" viewBox="0 0 10 10"><path d="M1 1L9 9M9 1L1 9" stroke="#bdbdbd" stroke-width="1.2"/></svg>
<svg class="a" style="left:159px;top:153px;" width="12" height="10" viewBox="0 0 12 10"><path d="M1 5.5L4.5 9L11 1" fill="none" stroke="#bdbdbd" stroke-width="1.4"/></svg>
<div class="t" style="left:191.0px;top:151.5px;font-size:13px;color:#555;transform:scaleX(1.187);transform-origin:0 0;font-style:italic;font-family:"Liberation Serif",serif">fx</div>
<div class="a" style="left:215.0px;top:147.0px;width:1430.5px;height:39.5px;background:#fff;border:1px solid #d2d2d2"></div>
<svg class="a" style="left:1633px;top:154px;" width="10" height="6" viewBox="0 0 10 6"><path d="M0.5 5.5L5 1L9.5 5.5" fill="none" stroke="#c6c6c6" stroke-width="1.2"/></svg>
<div class="a" style="left:0.0px;top:195.0px;width:1632.0px;height:17.0px;background:#e6e6e6"></div>
<div class="a" style="left:0.0px;top:211.0px;width:1632.0px;height:1.5px;background:#bababa"></div>
<svg class="a" style="left:9px;top:199px;" width="10" height="10" viewBox="0 0 10 10"><path d="M10 0V10H0z" fill="#b4b4b4"/></svg>
<div class="a" style="left:21.0px;top:195.0px;width:1.0px;height:650.0px;background:#ababab"></div>
<div class="a" style="left:1632px;top:195px;width:18px;height:650px;background:#e6e6e6"></div>
<div class="a" style="left:40.0px;top:195.5px;width:1.0px;height:15.5px;background:#c6c6c6"></div>
<div class="t" style="left:27.8px;top:198.2px;font-size:11.5px;color:#262626;transform:scaleX(0.843);transform-origin:0 0;">D</div>
<div class="a" style="left:145.5px;top:195.5px;width:1.0px;height:15.5px;background:#c6c6c6"></div>
<div class="t" style="left:89.8px;top:198.2px;font-size:11.5px;color:#262626;transform:scaleX(0.913);transform-origin:0 0;">E</div>
<div class="a" style="left:242.5px;top:195.5px;width:1.0px;height:15.5px;background:#c6c6c6"></div>
<div class="t" style="left:191.0px;top:198.2px;font-size:11.5px;color:#262626;transform:scaleX(0.997);transform-origin:0 0;">F</div>
<div class="a" style="left:395.5px;top:195.5px;width:1.0px;height:15.5px;background:#c6c6c6"></div>
<div class="t" style="left:316.0px;top:198.2px;font-size:11.5px;color:#262626;transform:scaleX(0.783);transform-origin:0 0;">G</div>
<div class="a" style="left:416.0px;top:195.5px;width:1.0px;height:15.5px;background:#c6c6c6"></div>
<div class="t" style="left:402.8px;top:198.2px;font-size:11.5px;color:#262626;transform:scaleX(0.843);transform-origin:0 0;">H</div>
<div class="a" style="left:521.5px;top:195.5px;width:1.0px;height:15.5px;background:#c6c6c6"></div>
<div class="t" style="left:468.2px;top:198.2px;font-size:11.5px;color:#262626;transform:scaleX(0.626);transform-origin:0 0;">I</div>
<div class="a" style="left:619.0px;top:195.5px;width:1.0px;height:15.5px;background:#c6c6c6"></div>
<div class="t" style="left:567.2px;top:198.2px;font-size:11.5px;color:#262626;transform:scaleX(1.217);transform-origin:0 0;">J</div>
<div class="a" style="left:771.5px;top:195.5px;width:1.0px;height:15.5px;background:#c6c6c6"></div>
<div class="t" style="left:692.2px;top:198.2px;font-size:11.5px;color:#262626;transform:scaleX(0.913);transform-origin:0 0;">K</div>
<div class="a" style="left:840.1px;top:195.5px;width:1.0px;height:15.5px;background:#c6c6c6"></div>
<div class="t" style="left:802.8px;top:198.2px;font-size:11.5px;color:#262626;transform:scaleX(1.095);transform-origin:0 0;">L</div>
<div class="a" style="left:909.2px;top:195.5px;width:1.0px;height:15.5px;background:#c6c6c6"></div>
<div class="t" style="left:871.2px;top:198.2px;font-size:11.5px;color:#262626;transform:scaleX(0.835);transform-origin:0 0;">M</div>
<div class="a" style="left:977.8px;top:195.5px;width:1.0px;height:15.5px;background:#c6c6c6"></div>
<div class="t" style="left:940.5px;top:198.2px;font-size:11.5px;color:#262626;transform:scaleX(0.843);transform-origin:0 0;">N</div>
<div class="a" style="left:1046.9px;top:195.5px;width:1.0px;height:15.5px;background:#c6c6c6"></div>
<div class="t" style="left:1009.4px;top:198.2px;font-size:11.5px;color:#262626;transform:scaleX(0.783);transform-origin:0 0;">O</div>
<div class="a" style="left:1115.3px;top:195.5px;width:1.0px;height:15.5px;background:#c6c6c6"></div>
<div class="t" style="left:1078.1px;top:198.2px;font-size:11.5px;color:#262626;transform:scaleX(0.913);transform-origin:0 0;">P</div>
<div class="a" style="left:1183.5px;top:195.5px;width:1.0px;height:15.5px;background:#c6c6c6"></div>
<div class="t" style="left:1146.4px;top:198.2px;font-size:11.5px;color:#262626;transform:scaleX(0.783);transform-origin:0 0;">Q</div>
<div class="a" style="left:1252.5px;top:195.5px;width:1.0px;height:15.5px;background:#c6c6c6"></div>
<div class="t" style="left:1215.0px;top:198.2px;font-size:11.5px;color:#262626;transform:scaleX(0.843);transform-origin:0 0;">R</div>
<div class="a" style="left:1321.5px;top:195.5px;width:1.0px;height:15.5px;background:#c6c6c6"></div>
<div class="t" style="left:1284.0px;top:198.2px;font-size:11.5px;color:#262626;transform:scaleX(0.913);transform-origin:0 0;">S</div>
<div class="a" style="left:1390.5px;top:195.5px;width:1.0px;height:15.5px;background:#c6c6c6"></div>
<div class="t" style="left:1353.0px;top:198.2px;font-size:11.5px;color:#262626;transform:scaleX(0.997);transform-origin:0 0;">T</div>
<div class="a" style="left:1458.5px;top:195.5px;width:1.0px;height:15.5px;background:#c6c6c6"></div>
<div class="t" style="left:1421.5px;top:198.2px;font-size:11.5px;color:#262626;transform:scaleX(0.843);transform-origin:0 0;">U</div>
<div class="a" style="left:1527.5px;top:195.5px;width:1.0px;height:15.5px;background:#c6c6c6"></div>
<div class="t" style="left:1490.0px;top:198.2px;font-size:11.5px;color:#262626;transform:scaleX(0.913);transform-origin:0 0;">V</div>
<div class="a" style="left:1596.5px;top:195.5px;width:1.0px;height:15.5px;background:#c6c6c6"></div>
<div class="t" style="left:1557.5px;top:198.2px;font-size:11.5px;color:#262626;transform:scaleX(0.921);transform-origin:0 0;">W</div>
<div class="a" style="left:1597px;top:195px;width:35px;height:16px;overflow:hidden">
<div class="t" style="left:31.0px;top:3.2px;font-size:11.5px;color:#262626;transform:scaleX(0.913);transform-origin:0 0;">X</div>
</div>
<div class="a" style="left:1631.0px;top:195.0px;width:1.0px;height:650.0px;background:#c6c6c6"></div>
<div class="a" style="left:0.0px;top:212.0px;width:21.0px;height:633.0px;background:#e6e6e6"></div>
<div class="a" style="left:0.0px;top:228.7px;width:21.0px;height:1.0px;background:#c6c6c6"></div>
<div class="t" style="left:8.2px;top:216.2px;font-size:11.5px;color:#262626;transform:scaleX(0.860);transform-origin:0 0;">1</div>
<div class="a" style="left:0.0px;top:244.9px;width:21.0px;height:1.0px;background:#c6c6c6"></div>
<div class="t" style="left:8.2px;top:232.4px;font-size:11.5px;color:#262626;transform:scaleX(0.860);transform-origin:0 0;">2</div>
<div class="a" style="left:0.0px;top:256.9px;width:21.0px;height:1.0px;background:#c6c6c6"></div>
<div class="t" style="left:8.2px;top:244.5px;font-size:11.5px;color:#262626;transform:scaleX(0.860);transform-origin:0 0;">3</div>
<div class="a" style="left:0.0px;top:269.0px;width:21.0px;height:1.0px;background:#c6c6c6"></div>
<div class="t" style="left:8.2px;top:256.5px;font-size:11.5px;color:#262626;transform:scaleX(0.860);transform-origin:0 0;">4</div>
<div class="a" style="left:0.0px;top:281.0px;width:21.0px;height:1.0px;background:#c6c6c6"></div>
<div class="t" style="left:8.2px;top:268.6px;font-size:11.5px;color:#262626;transform:scaleX(0.860);transform-origin:0 0;">5</div>
<div class="a" style="left:0.0px;top:293.1px;width:21.0px;height:1.0px;background:#c6c6c6"></div>
<div class="t" style="left:8.2px;top:280.6px;font-size:11.5px;color:#262626;transform:scaleX(0.860);transform-origin:0 0;">6</div>
<div class="a" style="left:0.0px;top:305.1px;width:21.0px;height:1.0px;background:#c6c6c6"></div>
<div class="t" style="left:8.2px;top:292.6px;font-size:11.5px;color:#262626;transform:scaleX(0.860);transform-origin:0 0;">7</div>
<div class="a" style="left:0.0px;top:317.1px;width:21.0px;height:1.0px;background:#c6c6c6"></div>
<div class="t" style="left:8.2px;top:304.7px;font-size:11.5px;color:#262626;transform:scaleX(0.860);transform-origin:0 0;">8</div>
<div class="a" style="left:0.0px;top:329.2px;width:21.0px;height:1.0px;background:#c6c6c6"></div>
<div class="t" style="left:8.2px;top:316.7px;font-size:11.5px;color:#262626;transform:scaleX(0.860);transform-origin:0 0;">9</div>
<div class="a" style="left:0.0px;top:341.2px;width:21.0px;height:1.0px;background:#c6c6c6"></div>
<div class="t" style="left:5.5px;top:328.8px;font-size:11.5px;color:#262626;transform:scaleX(0.860);transform-origin:0 0;">10</div>
<div class="a" style="left:0.0px;top:353.3px;width:21.0px;height:1.0px;background:#c6c6c6"></div>
<div class="t" style="left:5.5px;top:340.8px;font-size:11.5px;color:#262626;transform:scaleX(0.922);transform-origin:0 0;">11</div>
<div class="a" style="left:0.0px;top:365.3px;width:21.0px;height:1.0px;background:#c6c6c6"></div>
<div class="t" style="left:5.5px;top:352.8px;font-size:11.5px;color:#262626;transform:scaleX(0.860);transform-origin:0 0;">12</div>
<div class="a" style="left:0.0px;top:377.3px;width:21.0px;height:1.0px;background:#c6c6c6"></div>
<div class="t" style="left:5.5px;top:364.9px;font-size:11.5px;color:#262626;transform:scaleX(0.860);transform-origin:0 0;">13</div>
<div class="a" style="left:0.0px;top:389.4px;width:21.0px;height:1.0px;background:#c6c6c6"></div>
<div class="t" style="left:5.5px;top:376.9px;font-size:11.5px;color:#262626;transform:scaleX(0.860);transform-origin:0 0;">14</div>
<div class="a" style="left:0.0px;top:401.4px;width:21.0px;height:1.0px;background:#c6c6c6"></div>
<div class="t" style="left:5.5px;top:389.0px;font-size:11.5px;color:#262626;transform:scaleX(0.860);transform-origin:0 0;">15</div>
<div class="a" style="left:0.0px;top:413.5px;width:21.0px;height:1.0px;background:#c6c6c6"></div>
<div class="t" style="left:5.5px;top:401.0px;font-size:11.5px;color:#262626;transform:scaleX(0.860);transform-origin:0 0;">16</div>
<div class="a" style="left:0.0px;top:425.5px;width:21.0px;height:1.0px;background:#c6c6c6"></div>
<div class="t" style="left:5.5px;top:413.1px;font-size:11.5px;color:#262626;transform:scaleX(0.860);transform-origin:0 0;">17</div>
<div class="a" style="left:0.0px;top:437.5px;width:21.0px;height:1.0px;background:#c6c6c6"></div>
<div class="t" style="left:5.5px;top:425.1px;font-size:11.5px;color:#262626;transform:scaleX(0.860);transform-origin:0 0;">18</div>
<div class="a" style="left:0.0px;top:449.6px;width:21.0px;height:1.0px;background:#c6c6c6"></div>
<div class="t" style="left:5.5px;top:437.1px;font-size:11.5px;color:#262626;transform:scaleX(0.860);transform-origin:0 0;">19</div>
<div class="a" style="left:0.0px;top:461.6px;width:21.0px;height:1.0px;background:#c6c6c6"></div>
<div class="t" style="left:5.5px;top:449.2px;font-size:11.5px;color:#262626;transform:scaleX(0.860);transform-origin:0 0;">20</div>
<div class="a" style="left:0.0px;top:473.7px;width:21.0px;height:1.0px;background:#c6c6c6"></div>
<div class="t" style="left:5.5px;top:461.2px;font-size:11.5px;color:#262626;transform:scaleX(0.860);transform-origin:0 0;">21</div>
<div class="a" style="left:0.0px;top:485.7px;width:21.0px;height:1.0px;background:#c6c6c6"></div>
<div class="t" style="left:5.5px;top:473.2px;font-size:11.5px;color:#262626;transform:scaleX(0.860);transform-origin:0 0;">22</div>
<div class="a" style="left:0.0px;top:497.7px;width:21.0px;height:1.0px;background:#c6c6c6"></div>
<div class="t" style="left:5.5px;top:485.3px;font-size:11.5px;color:#262626;transform:scaleX(0.860);transform-origin:0 0;">23</div>
<div class="a" style="left:0.0px;top:509.8px;width:21.0px;height:1.0px;background:#c6c6c6"></div>
<div class="t" style="left:5.5px;top:497.3px;font-size:11.5px;color:#262626;transform:scaleX(0.860);transform-origin:0 0;">24</div>
<div class="a" style="left:0.0px;top:527.0px;width:21.0px;height:1.0px;background:#c6c6c6"></div>
<div class="t" style="left:5.5px;top:514.6px;font-size:11.5px;color:#262626;transform:scaleX(0.860);transform-origin:0 0;">25</div>
<div class="a" style="left:0.0px;top:544.3px;width:21.0px;height:1.0px;background:#c6c6c6"></div>
<div class="t" style="left:5.5px;top:531.8px;font-size:11.5px;color:#262626;transform:scaleX(0.860);transform-origin:0 0;">26</div>
<div class="a" style="left:0.0px;top:561.5px;width:21.0px;height:1.0px;background:#c6c6c6"></div>
<div class="t" style="left:5.5px;top:549.0px;font-size:11.5px;color:#262626;transform:scaleX(0.860);transform-origin:0 0;">27</div>
<div class="a" style="left:0.0px;top:578.7px;width:21.0px;height:1.0px;background:#c6c6c6"></div>
<div class="t" style="left:5.5px;top:566.3px;font-size:11.5px;color:#262626;transform:scaleX(0.860);transform-origin:0 0;">28</div>
<div class="a" style="left:0.0px;top:595.9px;width:21.0px;height:1.0px;background:#c6c6c6"></div>
<div class="t" style="left:5.5px;top:583.5px;font-size:11.5px;color:#262626;transform:scaleX(0.860);transform-origin:0 0;">29</div>
<div class="a" style="left:0.0px;top:613.2px;width:21.0px;height:1.0px;background:#c6c6c6"></div>
<div class="t" style="left:5.5px;top:600.7px;font-size:11.5px;color:#262626;transform:scaleX(0.860);transform-origin:0 0;">30</div>
<div class="a" style="left:0.0px;top:630.4px;width:21.0px;height:1.0px;background:#c6c6c6"></div>
<div class="t" style="left:5.5px;top:618.0px;font-size:11.5px;color:#262626;transform:scaleX(0.860);transform-origin:0 0;">31</div>
<div class="a" style="left:0.0px;top:647.6px;width:21.0px;height:1.0px;background:#c6c6c6"></div>
<div class="t" style="left:5.5px;top:635.2px;font-size:11.5px;color:#262626;transform:scaleX(0.860);transform-origin:0 0;">32</div>
<div class="a" style="left:0.0px;top:664.9px;width:21.0px;height:1.0px;background:#c6c6c6"></div>
<div class="t" style="left:5.5px;top:652.4px;font-size:11.5px;color:#262626;transform:scaleX(0.860);transform-origin:0 0;">33</div>
<div class="a" style="left:0.0px;top:682.1px;width:21.0px;height:1.0px;background:#c6c6c6"></div>
<div class="t" style="left:5.5px;top:669.7px;font-size:11.5px;color:#262626;transform:scaleX(0.860);transform-origin:0 0;">34</div>
<div class="a" style="left:0.0px;top:699.3px;width:21.0px;height:1.0px;background:#c6c6c6"></div>
<div class="t" style="left:5.5px;top:686.9px;font-size:11.5px;color:#262626;transform:scaleX(0.860);transform-origin:0 0;">35</div>
<div class="a" style="left:0.0px;top:716.6px;width:21.0px;height:1.0px;background:#c6c6c6"></div>
<div class="t" style="left:5.5px;top:704.1px;font-size:11.5px;color:#262626;transform:scaleX(0.860);transform-origin:0 0;">36</div>
<div class="a" style="left:0.0px;top:733.8px;width:21.0px;height:1.0px;background:#c6c6c6"></div>
<div class="t" style="left:5.5px;top:721.3px;font-size:11.5px;color:#262626;transform:scaleX(0.860);transform-origin:0 0;">37</div>
<div class="a" style="left:0.0px;top:751.0px;width:21.0px;height:1.0px;background:#c6c6c6"></div>
<div class="t" style="left:5.5px;top:738.6px;font-size:11.5px;color:#262626;transform:scaleX(0.860);transform-origin:0 0;">38</div>
<div class="a" style="left:0.0px;top:768.2px;width:21.0px;height:1.0px;background:#c6c6c6"></div>
<div class="t" style="left:5.5px;top:755.8px;font-size:11.5px;color:#262626;transform:scaleX(0.860);transform-origin:0 0;">39</div>
<div class="a" style="left:0.0px;top:785.5px;width:21.0px;height:1.0px;background:#c6c6c6"></div>
<div class="t" style="left:5.5px;top:773.0px;font-size:11.5px;color:#262626;transform:scaleX(0.860);transform-origin:0 0;">40</div>
<div class="a" style="left:0.0px;top:802.7px;width:21.0px;height:1.0px;background:#c6c6c6"></div>
<div class="t" style="left:5.5px;top:790.3px;font-size:11.5px;color:#262626;transform:scaleX(0.860);transform-origin:0 0;">41</div>
<div class="a" style="left:0.0px;top:819.9px;width:21.0px;height:1.0px;background:#c6c6c6"></div>
<div class="t" style="left:5.5px;top:807.5px;font-size:11.5px;color:#262626;transform:scaleX(0.860);transform-origin:0 0;">42</div>
<div class="a" style="left:0.0px;top:837.2px;width:21.0px;height:1.0px;background:#c6c6c6"></div>
<div class="t" style="left:5.5px;top:824.7px;font-size:11.5px;color:#262626;transform:scaleX(0.860);transform-origin:0 0;">43</div>
<div class="a" style="left:1633.0px;top:197.5px;width:16.0px;height:11.5px;background:#fff;border:1px solid #9a9a9a"></div>
<svg class="a" style="left:1637px;top:201px;" width="8" height="4" viewBox="0 0 8 4"><path d="M0 4L4 0L8 4z" fill="#555"/></svg>
<div class="a" style="left:1633.0px;top:209.0px;width:16.0px;height:369.0px;background:#fff;border:1px solid #9a9a9a"></div>
<div class="a" style="left:1633.0px;top:833.0px;width:16.0px;height:12.0px;background:#fff;border:1px solid #9a9a9a"></div>
<svg class="a" style="left:1637px;top:837px;" width="8" height="4" viewBox="0 0 8 4"><path d="M0 0L4 4L8 0z" fill="#555"/></svg>
<div class="a" style="left:0.0px;top:845.0px;width:1650.0px;height:24.0px;background:#e6e6e6"></div>
<div class="a" style="left:0.0px;top:845.0px;width:1632.0px;height:1.0px;background:#c6c6c6"></div>
<svg class="a" style="left:22px;top:853px;" width="5" height="8" viewBox="0 0 5 8"><path d="M5 0V8L0 4z" fill="#1d7845"/></svg>
<svg class="a" style="left:47px;top:853px;" width="5" height="8" viewBox="0 0 5 8"><path d="M0 0V8L5 4z" fill="#b8b8b8"/></svg>
<div class="t" style="left:69.0px;top:853.5px;font-size:11px;font-weight:bold;color:#1d7845;transform:scaleX(1.091);transform-origin:0 0;">...</div>
<div class="a" style="left:86.5px;top:850.0px;width:1.0px;height:14.0px;background:#9a9a9a"></div>
<div class="a" style="left:143.8px;top:850.0px;width:1.0px;height:14.0px;background:#9a9a9a"></div>
<div class="a" style="left:201.5px;top:850.0px;width:1.0px;height:14.0px;background:#9a9a9a"></div>
<div class="a" style="left:259.0px;top:850.0px;width:1.0px;height:14.0px;background:#9a9a9a"></div>
<div class="a" style="left:316.3px;top:850.0px;width:1.0px;height:14.0px;background:#9a9a9a"></div>
<div class="a" style="left:374.0px;top:850.0px;width:1.0px;height:14.0px;background:#9a9a9a"></div>
<div class="a" style="left:425.4px;top:850.0px;width:1.0px;height:14.0px;background:#9a9a9a"></div>
<div class="a" style="left:483.5px;top:850.0px;width:1.0px;height:14.0px;background:#9a9a9a"></div>
<div class="a" style="left:534.9px;top:850.0px;width:1.0px;height:14.0px;background:#9a9a9a"></div>
<div class="a" style="left:586.5px;top:850.0px;width:1.0px;height:14.0px;background:#9a9a9a"></div>
<div class="a" style="left:638.4px;top:850.0px;width:1.0px;height:14.0px;background:#9a9a9a"></div>
<div class="t" style="left:97.2px;top:851.2px;font-size:11.5px;color:#444;transform:scaleX(0.949);transform-origin:0 0;">Hoja15</div>
<div class="t" style="left:154.5px;top:851.2px;font-size:11.5px;color:#444;transform:scaleX(0.963);transform-origin:0 0;">Hoja16</div>
<div class="t" style="left:212.0px;top:851.2px;font-size:11.5px;color:#444;transform:scaleX(0.969);transform-origin:0 0;">Hoja19</div>
<div class="t" style="left:269.7px;top:851.2px;font-size:11.5px;color:#444;transform:scaleX(0.958);transform-origin:0 0;">Hoja17</div>
<div class="t" style="left:327.0px;top:851.2px;font-size:11.5px;color:#444;transform:scaleX(0.960);transform-origin:0 0;">Hoja18</div>
<div class="t" style="left:384.7px;top:851.2px;font-size:11.5px;color:#444;transform:scaleX(0.959);transform-origin:0 0;">Hoja9</div>
<div class="t" style="left:436.4px;top:851.2px;font-size:11.5px;color:#444;transform:scaleX(0.977);transform-origin:0 0;">Hoja10</div>
<div class="t" style="left:494.0px;top:851.2px;font-size:11.5px;color:#444;transform:scaleX(0.965);transform-origin:0 0;">Hoja6</div>
<div class="t" style="left:545.5px;top:851.2px;font-size:11.5px;color:#444;transform:scaleX(0.969);transform-origin:0 0;">Hoja7</div>
<div class="t" style="left:597.0px;top:851.2px;font-size:11.5px;color:#444;transform:scaleX(0.965);transform-origin:0 0;">Hoja8</div>
<div class="t" style="left:648.0px;top:851.2px;font-size:11.5px;color:#444;transform:scaleX(1.055);transform-origin:0 0;">bbdd</div>
<div class="a" style="left:686.3px;top:845.0px;width:56.4px;height:21.0px;background:#f0f0f0;border:1px solid #c6c6c6;border-top:none"></div>
<div class="a" style="left:686.3px;top:864.0px;width:56.4px;height:2.5px;background:#217346"></div>
<div class="t" style="left:696.4px;top:850.8px;font-size:11.5px;font-weight:bold;color:#1d7845;transform:scaleX(0.965);transform-origin:0 0;">Hoja20</div>
<div class="a" style="left:771px;top:849.5px;width:15px;height:15px;border-radius:50%;border:1.2px solid #777"></div>
<div class="a" style="left:775.0px;top:856.5px;width:7.0px;height:1.2px;background:#777"></div>
<div class="a" style="left:777.9px;top:853.5px;width:1.2px;height:7.3px;background:#777"></div>
<div class="a" style="left:990.5px;top:853.0px;width:1.0px;height:1.0px;background:#999"></div>
<div class="a" style="left:990.5px;top:857.0px;width:1.0px;height:1.0px;background:#999"></div>
<div class="a" style="left:990.5px;top:861.0px;width:1.0px;height:1.0px;background:#999"></div>
<div class="a" style="left:1004.4px;top:851.0px;width:627.6px;height:12.5px;background:#d4d4d4"></div>
<div class="a" style="left:1004.4px;top:851.0px;width:13.6px;height:12.5px;background:#fff;border:1px solid #9a9a9a"></div>
<svg class="a" style="left:1009px;top:854px;" width="4" height="7" viewBox="0 0 4 7"><path d="M4 0V7L0 3.5z" fill="#555"/></svg>
<div class="a" style="left:1096.5px;top:851.0px;width:522.5px;height:12.5px;background:#fff;border:1px solid #9a9a9a"></div>
<div class="a" style="left:1619.0px;top:851.0px;width:13.0px;height:12.5px;background:#fff;border:1px solid #9a9a9a"></div>
<svg class="a" style="left:1624px;top:854px;" width="4" height="7" viewBox="0 0 4 7"><path d="M0 0V7L4 3.5z" fill="#555"/></svg>
<div class="a" style="left:0.0px;top:869.0px;width:1650.0px;height:19.0px;background:#f3f2f1"></div>
<div class="t" style="left:6.4px;top:873.5px;font-size:11px;color:#444;transform:scaleX(0.852);transform-origin:0 0;">Listo</div>
<svg class="a" style="left:43px;top:873px;" width="13" height="12" viewBox="0 0 13 12"><g fill="none" stroke="#555" stroke-width="1"><rect x="0.5" y="0.5" width="10" height="9"/><path d="M0.5 3h10M3 5h4M3 7h2"/><circle cx="9.5" cy="8.5" r="2.5" fill="#f3f2f1"/></g></svg>
<svg class="a" style="left:71px;top:872px;" width="12" height="13" viewBox="0 0 12 13"><g fill="none" stroke="#555" stroke-width="1"><circle cx="5" cy="1.8" r="1.3"/><path d="M0.5 4h9M5 4v4L2 12M5 8l2 2M7 9l4 4M11 9l-4 4"/></g></svg>
<div class="t" style="left:87.0px;top:873.0px;font-size:11px;color:#444;transform:scaleX(0.886);transform-origin:0 0;">Accesibilidad: es necesario investigar</div>
<svg class="a" style="left:1222px;top:872px;" width="14" height="13" viewBox="0 0 14 13"><g fill="none" stroke="#555" stroke-width="1"><rect x="0.5" y="0.5" width="12" height="8"/><path d="M4 11h4"/><circle cx="10" cy="9" r="2.3" fill="#f3f2f1"/></g></svg>
<div class="t" style="left:1238.0px;top:873.5px;font-size:11px;color:#444;transform:scaleX(0.909);transform-origin:0 0;">Configuración de visualización</div>
<div class="a" style="left:1390.0px;top:869.0px;width:33.5px;height:19.0px;background:#dcdcdc"></div>
<svg class="a" style="left:1400px;top:873px;" width="12" height="11" viewBox="0 0 12 11"><g fill="none" stroke="#444" stroke-width="1"><rect x="0.5" y="0.5" width="11" height="10"/><path d="M4 0.5v10M8 0.5v10M0.5 4h11M0.5 7h11"/></g></svg>
<svg class="a" style="left:1435px;top:873px;" width="12" height="11" viewBox="0 0 12 11"><g fill="none" stroke="#444" stroke-width="1"><rect x="0.5" y="0.5" width="11" height="10"/><rect x="3" y="2.5" width="6" height="6"/><path d="M4 4h4M4 6h4"/></g></svg>
<svg class="a" style="left:1469px;top:873px;" width="12" height="11" viewBox="0 0 12 11"><g fill="none" stroke="#444" stroke-width="1"><rect x="0.5" y="0.5" width="11" height="10"/><path d="M4 0.5v6h4v-6"/></g></svg>
<div class="a" style="left:1496.0px;top:878.5px;width:8.0px;height:1.0px;background:#555"></div>
<div class="a" style="left:1509.0px;top:878.5px;width:86.0px;height:1.0px;background:#888"></div>
<div class="a" style="left:1551.0px;top:873.5px;width:3.0px;height:10.5px;background:#555"></div>
<div class="a" style="left:1598.0px;top:878.5px;width:8.0px;height:1.0px;background:#555"></div>
<div class="a" style="left:1601.5px;top:875.0px;width:1.0px;height:8.0px;background:#555"></div>
<div class="t" style="left:1617.5px;top:873.5px;font-size:11px;color:#444;transform:scaleX(0.818);transform-origin:0 0;">100 %</div>
<div class="a" style="left:0.0px;top:888.0px;width:1650.0px;height:41.0px;background:#474747"></div>
<svg class="a" style="left:13px;top:900px;" width="16" height="16" viewBox="0 0 16 16"><g fill="#fff"><path d="M0 2.2L6.5 1.3V7.6H0z"/><path d="M7.3 1.2L16 0V7.6H7.3z"/><path d="M0 8.4H6.5V14.7L0 13.8z"/><path d="M7.3 8.4H16V16L7.3 14.8z"/></g></svg>
<div class="a" style="left:40.7px;top:888.0px;width:295.9px;height:41.0px;background:#f2f2f2"></div>
<svg class="a" style="left:52px;top:902px;" width="14" height="14" viewBox="0 0 14 14"><g fill="none" stroke="#222" stroke-width="1.3"><circle cx="8.5" cy="5.5" r="4.5"/><path d="M5.3 8.7L0.8 13.2"/></g></svg>
<div class="t" style="left:75.8px;top:902.0px;font-size:13px;color:#333;transform:scaleX(0.954);transform-origin:0 0;">Escribe aquí para buscar</div>
<svg class="a" style="left:260px;top:888px;" width="77" height="41" viewBox="0 0 77 41"><path d="M17 37 C22 24 30 19 45 21 C52 22 60 21 77 16 V31 H17z" fill="#7ea850"/><path d="M9 37 C12 31 18 29 30 28 C45 27 60 26 77 25 V37z" fill="#5e3a48"/><g fill="#cfe3ef"><ellipse cx="22.5" cy="12" rx="7" ry="3.5"/><ellipse cx="37" cy="16" rx="5" ry="2.5"/></g><path d="M46.5 11l1 3 2 1-2 1-1 3-1-3-2-1 2-1z" fill="#e070f0"/><circle cx="16.5" cy="21" r="1.7" fill="#f5a000"/><circle cx="68.5" cy="15" r="1.7" fill="#50c8e8"/><path d="M59 29V12M53.5 28V17" stroke="#7a4a40" stroke-width="2"/><g fill="#6cc040"><ellipse cx="59" cy="11" rx="5" ry="2.5"/><ellipse cx="53.5" cy="16" rx="4" ry="2"/><path d="M27 31l-2-5 3 3zM40 28l-1-5 2 3zM54 32l-3-5 4 3zM67 27l-1-4 2 2z"/></g></svg>
<div class="a" style="left:350px;top:902px;width:15px;height:15px;border-radius:50%;border:2px solid #fff"></div>
<svg class="a" style="left:391px;top:901px;" width="15" height="16" viewBox="0 0 15 16"><g fill="none" stroke="#fff" stroke-width="1.3"><rect x="1.5" y="4" width="8" height="8"/><path d="M0 1.5h11M0 14.5h11M13 0v16"/></g><rect x="11.5" y="4.5" width="3" height="3" fill="#fff"/></svg>
<div class="a" style="left:424.0px;top:899.0px;width:1.0px;height:19.0px;background:#777"></div>
<div class="a" style="left:426.5px;top:899.0px;width:1.0px;height:19.0px;background:#777"></div>
<div class="a" style="left:565.0px;top:888.0px;width:39.0px;height:37.0px;background:#5e5e5e"></div>
<div class="a" style="left:443.0px;top:920.0px;width:34.0px;height:2.2px;background:#76b9ed"></div>
<div class="a" style="left:526.5px;top:920.0px;width:34.0px;height:2.2px;background:#76b9ed"></div>
<div class="a" style="left:568.3px;top:920.0px;width:34.0px;height:2.2px;background:#76b9ed"></div>
<div class="a" style="left:653.0px;top:920.0px;width:34.0px;height:2.2px;background:#76b9ed"></div>
<div class="a" style="left:695.5px;top:920.0px;width:34.0px;height:2.2px;background:#76b9ed"></div>
<div class="a" style="left:779.5px;top:920.0px;width:34.0px;height:2.2px;background:#76b9ed"></div>
<div class="a" style="left:821.4px;top:920.0px;width:34.0px;height:2.2px;background:#76b9ed"></div>
<div class="a" style="left:864.0px;top:920.0px;width:34.0px;height:2.2px;background:#76b9ed"></div>
<div class="a" style="left:905.7px;top:920.0px;width:34.0px;height:2.2px;background:#76b9ed"></div>
<div class="a" style="left:947.5px;top:920.0px;width:34.0px;height:2.2px;background:#76b9ed"></div>
<div class="a" style="left:989.4px;top:920.0px;width:34.0px;height:2.2px;background:#76b9ed"></div>
<svg class="a" style="left:448px;top:894px;" width="26" height="24" viewBox="0 0 26 24"><rect x="8" y="2" width="14" height="16" fill="#1490df"/><rect x="12" y="0" width="10" height="8" fill="#50d9ff"/><rect x="1" y="5" width="12" height="12" fill="#0a64c4"/><text x="3" y="15" font-size="10" font-weight="bold" fill="#fff" font-family="Liberation Sans">O</text><rect x="11" y="12" width="13" height="10" fill="#e8b46c"/><path d="M11 12l6.5 5 6.5-5" fill="none" stroke="#fff" stroke-width="1.2"/></svg>
<svg class="a" style="left:490px;top:895px;" width="24" height="22" viewBox="0 0 24 22"><circle cx="13" cy="11" r="10" fill="#ed6c47"/><path d="M13 1a10 10 0 0 1 10 10H13z" fill="#ff8f6b"/><rect x="1" y="4.5" width="12" height="13" rx="1" fill="#c43e1c"/><text x="3.5" y="15" font-size="10" font-weight="bold" fill="#fff" font-family="Liberation Sans">P</text></svg>
<svg class="a" style="left:532px;top:895px;" width="24" height="22" viewBox="0 0 24 22"><rect x="7" y="1" width="16" height="20" rx="1" fill="#2b7cd3"/><path d="M7 8h16M7 14h16" stroke="#41a5ee" stroke-width="2"/><rect x="1" y="4.5" width="12" height="13" rx="1" fill="#185abd"/><text x="2" y="15" font-size="10" font-weight="bold" fill="#fff" font-family="Liberation Sans">W</text></svg>
<svg class="a" style="left:574px;top:895px;" width="24" height="22" viewBox="0 0 24 22"><rect x="7" y="1" width="16" height="20" rx="1" fill="#21a366"/><rect x="15" y="1" width="8" height="10" fill="#33c481"/><rect x="7" y="11" width="16" height="10" fill="#107c41"/><rect x="1" y="4.5" width="12" height="13" rx="1" fill="#107c41"/><text x="3.5" y="15" font-size="10" font-weight="bold" fill="#fff" font-family="Liberation Sans">X</text></svg>
<svg class="a" style="left:617px;top:895px;" width="22" height="22" viewBox="0 0 22 22"><path d="M11 0l10 6v10l-10 6-10-6V6z" fill="#fff"/><text x="4" y="14" font-size="9" font-weight="bold" fill="#1f7aa8" font-family="Liberation Sans">VC</text></svg>
<svg class="a" style="left:659px;top:894px;" width="22" height="24" viewBox="0 0 22 24"><rect x="0" y="0" width="22" height="24" rx="2" fill="#4fb830"/><path d="M16 6H7v12h9" fill="none" stroke="#fff" stroke-width="3"/></svg>
<svg class="a" style="left:700px;top:896px;" width="24" height="20" viewBox="0 0 24 20"><path d="M0 2h9l2 2h13v16H0z" fill="#e8b030"/><rect x="0" y="6" width="24" height="14" fill="#ffd04a"/><rect x="7" y="11" width="10" height="6" fill="#1a74c4"/></svg>
<svg class="a" style="left:743px;top:894px;" width="22" height="23" viewBox="0 0 22 23"><circle cx="11" cy="12" r="10" fill="#ff7139"/><circle cx="12" cy="13" r="6" fill="#7b2fd0"/><path d="M3 8c2-6 10-8 15-4-3-1-6 1-6 4" fill="#ffbd4f"/></svg>
<svg class="a" style="left:784px;top:894px;" width="26" height="24" viewBox="0 0 26 24"><rect x="9" y="4" width="13" height="13" rx="2" fill="#7b83eb"/><circle cx="19" cy="3" r="3" fill="#7b83eb"/><rect x="1" y="5" width="13" height="13" rx="1" fill="#4b53bc"/><text x="4" y="15.5" font-size="10" font-weight="bold" fill="#fff" font-family="Liberation Sans">T</text><circle cx="20" cy="17" r="6" fill="#d13438"/><text x="17" y="21" font-size="9" fill="#fff" font-family="Liberation Sans">2</text></svg>
<svg class="a" style="left:827px;top:895px;" width="24" height="24" viewBox="0 0 24 24"><circle cx="11" cy="11" r="10" fill="#db4437"/><path d="M11 11L2.3 16A10 10 0 0 0 16 19.7z" fill="#0f9d58"/><path d="M11 11L16 19.7A10 10 0 0 0 21 11z" fill="#ffcd40"/><circle cx="11" cy="11" r="4.5" fill="#fff"/><circle cx="11" cy="11" r="3.5" fill="#4285f4"/><circle cx="18" cy="18" r="5.5" fill="#128a9a"/><text x="15.5" y="22" font-size="8" fill="#fff" font-family="Liberation Sans">J</text></svg>
<svg class="a" style="left:870px;top:895px;" width="22" height="22" viewBox="0 0 22 22"><rect x="0" y="0" width="22" height="22" rx="2" fill="#001e36"/><rect x="1" y="1" width="20" height="20" rx="2" fill="none" stroke="#31a8ff" stroke-width="1"/><text x="3.5" y="15" font-size="10" font-weight="bold" fill="#31a8ff" font-family="Liberation Sans">Ps</text></svg>
<svg class="a" style="left:911px;top:895px;" width="23" height="22" viewBox="0 0 23 22"><rect x="0" y="0" width="23" height="22" rx="1" fill="#2a8ce8"/><path d="M0 22L9 10l6 7 3-3 5 8z" fill="#0b4ba0"/><circle cx="15" cy="6" r="2.5" fill="#fff"/></svg>
<svg class="a" style="left:953px;top:894px;" width="23" height="23" viewBox="0 0 23 23"><circle cx="11.5" cy="11.5" r="11" fill="#1ed760"/><g fill="none" stroke="#191414" stroke-width="2" stroke-linecap="round"><path d="M5 8c4-1.5 9-1 13 1"/><path d="M6 12c3.5-1 7-0.5 10.5 1"/><path d="M7 15.5c3-0.8 6-0.3 8 0.8"/></g></svg>
<svg class="a" style="left:996px;top:895px;" width="21" height="21" viewBox="0 0 21 21"><g fill="none" stroke="#fff" stroke-width="3" stroke-dasharray="3 2.5"><circle cx="10.5" cy="10.5" r="8"/></g><circle cx="10.5" cy="10.5" r="6" fill="none" stroke="#fff" stroke-width="2.5"/></svg>
<svg class="a" style="left:1224px;top:894px;" width="30" height="30" viewBox="0 0 30 30"><circle cx="14" cy="14" r="13" fill="#fff"/><circle cx="14" cy="14" r="11" fill="#1a86d8"/><text x="8" y="21" font-size="18" font-weight="bold" fill="#fff" font-family="Liberation Sans">?</text><circle cx="22" cy="22" r="6" fill="#f4a826"/><text x="20.5" y="26" font-size="9" font-weight="bold" fill="#fff" font-family="Liberation Sans">i</text></svg>
<div class="a" style="left:1321px;top:900px;width:17px;height:17px;border-radius:50%;background:radial-gradient(circle at 35% 35%,#ffd24a,#f39a12)"></div>
<div class="a" style="left:1334px;top:912px;width:6px;height:6px;border-radius:50%;background:#e81123"></div>
<div class="t" style="left:1346.4px;top:902.5px;font-size:13px;color:#fff;transform:scaleX(0.875);transform-origin:0 0;">32°C</div>
<div class="t" style="left:1379.0px;top:902.5px;font-size:13px;color:#fff;transform:scaleX(0.901);transform-origin:0 0;">Soleado</div>
<svg class="a" style="left:1435px;top:904px;" width="12" height="7" viewBox="0 0 12 7"><path d="M0.5 6.5L6 1L11.5 6.5" fill="none" stroke="#fff" stroke-width="1.3"/></svg>
<svg class="a" style="left:1455px;top:901px;" width="13" height="16" viewBox="0 0 13 16"><g fill="none" stroke="#fff" stroke-width="1.1"><rect x="1" y="4" width="8" height="8" rx="1"/><path d="M9 6l3-2v8l-3-2"/><path d="M2 1h6M2 15h6"/></g></svg>
<svg class="a" style="left:1476px;top:901px;" width="14" height="14" viewBox="0 0 14 14"><g fill="none" stroke="#fff" stroke-width="1.1"><path d="M1 13a12 12 0 0 1 12-12M4 13a9 9 0 0 1 9-9M7 13a6 6 0 0 1 6-6"/></g><circle cx="12" cy="12" r="1.5" fill="#fff"/></svg>
<svg class="a" style="left:1495px;top:901px;" width="15" height="14" viewBox="0 0 15 14"><g fill="none" stroke="#fff" stroke-width="1.1"><path d="M1 5h3l4-4v12l-4-4H1z"/><path d="M10 4a4 4 0 0 1 0 6M12 2a7 7 0 0 1 0 10"/></g></svg>
<div class="t" style="left:1520.0px;top:903.0px;font-size:11px;color:#fff;transform:scaleX(0.727);transform-origin:0 0;">ESP</div>
<div class="t" style="left:1561.0px;top:889.0px;font-size:11px;color:#fff;transform:scaleX(0.945);transform-origin:0 0;">13:19</div>
<div class="t" style="left:1558.0px;top:902.5px;font-size:11px;color:#fff;transform:scaleX(0.975);transform-origin:0 0;">jueves</div>
<div class="t" style="left:1549.0px;top:915.8px;font-size:11px;color:#fff;transform:scaleX(0.908);transform-origin:0 0;">21/07/2022</div>
<svg class="a" style="left:1613px;top:899px;" width="22" height="22" viewBox="0 0 22 22"><path d="M1 1h15v10H5l-4 3z" fill="#fff"/><path d="M3.5 4h10M3.5 7h10" stroke="#474747" stroke-width="1"/><circle cx="14" cy="14" r="6" fill="#474747" stroke="#fff" stroke-width="1"/><text x="11" y="18" font-size="10" fill="#fff" font-family="Liberation Sans">8</text></svg>
<div class="a" style="left:40.2px;top:229.3px;width:356.4px;height:16.2px;background:#d9e1f2"></div>
<div class="a" style="left:40.2px;top:244.5px;width:356.4px;height:1.0px;background:#8ea9db"></div>
<div class="t" style="left:43.3px;top:231.1px;font-size:13px;font-weight:bold;color:#000;transform:scaleX(0.855);transform-origin:0 0;">Etiquetas de fila</div>
<div class="a" style="left:131.3px;top:230.0px;width:14.3px;height:14.0px;background:#f7f8fb;border:1px solid #c9cfdb"></div>
<svg class="a" style="left:135.3px;top:235.5px;" width="6" height="3.5" viewBox="0 0 6 3.5"><path d="M0 0h6L3 3.5z" fill="#555"/></svg>
<div class="t" style="left:148.4px;top:231.1px;font-size:13px;font-weight:bold;color:#000;transform:scaleX(0.822);transform-origin:0 0;">Suma de VENTAS</div>
<div class="t" style="left:245.6px;top:231.1px;font-size:13px;font-weight:bold;color:#000;transform:scaleX(0.809);transform-origin:0 0;">Suma de VALOR DE VENTAS</div>
<div class="t" style="left:43.3px;top:242.8px;font-size:13px;color:#000;transform:scaleX(0.877);transform-origin:0 0;">Delegación 1</div>
<div class="t" style="left:228.3px;top:242.8px;font-size:13px;color:#000;transform:scaleX(0.877);transform-origin:0 0;">34</div>
<div class="t" style="left:365.5px;top:242.8px;font-size:13px;color:#000;transform:scaleX(0.877);transform-origin:0 0;">5.100</div>
<div class="t" style="left:43.3px;top:254.8px;font-size:13px;color:#000;transform:scaleX(0.877);transform-origin:0 0;">Delegación 10</div>
<div class="t" style="left:228.3px;top:254.8px;font-size:13px;color:#000;transform:scaleX(0.877);transform-origin:0 0;">38</div>
<div class="t" style="left:368.6px;top:254.8px;font-size:13px;color:#000;transform:scaleX(0.877);transform-origin:0 0;">5700</div>
<div class="t" style="left:43.3px;top:266.9px;font-size:13px;color:#000;transform:scaleX(0.877);transform-origin:0 0;">Delegación 11</div>
<div class="t" style="left:228.3px;top:266.9px;font-size:13px;color:#000;transform:scaleX(0.877);transform-origin:0 0;">30</div>
<div class="t" style="left:368.6px;top:266.9px;font-size:13px;color:#000;transform:scaleX(0.877);transform-origin:0 0;">5400</div>
<div class="t" style="left:43.3px;top:278.9px;font-size:13px;color:#000;transform:scaleX(0.877);transform-origin:0 0;">Delegación 2</div>
<div class="t" style="left:229.2px;top:278.9px;font-size:13px;color:#000;transform:scaleX(0.877);transform-origin:0 0;">11</div>
<div class="t" style="left:368.6px;top:278.9px;font-size:13px;color:#000;transform:scaleX(0.877);transform-origin:0 0;">1650</div>
<div class="t" style="left:43.3px;top:291.0px;font-size:13px;color:#000;transform:scaleX(0.877);transform-origin:0 0;">Delegación 3</div>
<div class="t" style="left:228.3px;top:291.0px;font-size:13px;color:#000;transform:scaleX(0.877);transform-origin:0 0;">15</div>
<div class="t" style="left:368.6px;top:291.0px;font-size:13px;color:#000;transform:scaleX(0.877);transform-origin:0 0;">2250</div>
<div class="t" style="left:43.3px;top:303.0px;font-size:13px;color:#000;transform:scaleX(0.877);transform-origin:0 0;">Delegación 4</div>
<div class="t" style="left:228.3px;top:303.0px;font-size:13px;color:#000;transform:scaleX(0.877);transform-origin:0 0;">45</div>
<div class="t" style="left:368.6px;top:303.0px;font-size:13px;color:#000;transform:scaleX(0.877);transform-origin:0 0;">6750</div>
<div class="t" style="left:43.3px;top:315.0px;font-size:13px;color:#000;transform:scaleX(0.877);transform-origin:0 0;">Delegación 5</div>
<div class="t" style="left:228.3px;top:315.0px;font-size:13px;color:#000;transform:scaleX(0.877);transform-origin:0 0;">26</div>
<div class="t" style="left:368.6px;top:315.0px;font-size:13px;color:#000;transform:scaleX(0.877);transform-origin:0 0;">3900</div>
<div class="t" style="left:43.3px;top:327.1px;font-size:13px;color:#000;transform:scaleX(0.877);transform-origin:0 0;">Delegación 6</div>
<div class="t" style="left:228.3px;top:327.1px;font-size:13px;color:#000;transform:scaleX(0.877);transform-origin:0 0;">35</div>
<div class="t" style="left:368.6px;top:327.1px;font-size:13px;color:#000;transform:scaleX(0.877);transform-origin:0 0;">5250</div>
<div class="t" style="left:43.3px;top:339.1px;font-size:13px;color:#000;transform:scaleX(0.877);transform-origin:0 0;">Delegación 7</div>
<div class="t" style="left:228.3px;top:339.1px;font-size:13px;color:#000;transform:scaleX(0.877);transform-origin:0 0;">19</div>
<div class="t" style="left:368.6px;top:339.1px;font-size:13px;color:#000;transform:scaleX(0.877);transform-origin:0 0;">2850</div>
<div class="t" style="left:43.3px;top:351.2px;font-size:13px;color:#000;transform:scaleX(0.877);transform-origin:0 0;">Delegación 8</div>
<div class="t" style="left:222.0px;top:351.2px;font-size:13px;color:#000;transform:scaleX(0.877);transform-origin:0 0;">132</div>
<div class="t" style="left:362.3px;top:351.2px;font-size:13px;color:#000;transform:scaleX(0.877);transform-origin:0 0;">14241</div>
<div class="t" style="left:43.3px;top:363.2px;font-size:13px;color:#000;transform:scaleX(0.877);transform-origin:0 0;">Delegación 9</div>
<div class="t" style="left:228.3px;top:363.2px;font-size:13px;color:#000;transform:scaleX(0.877);transform-origin:0 0;">18</div>
<div class="t" style="left:368.6px;top:363.2px;font-size:13px;color:#000;transform:scaleX(0.877);transform-origin:0 0;">2700</div>
<div class="a" style="left:40.2px;top:377.9px;width:356.4px;height:12.0px;background:#d9e1f2"></div>
<div class="a" style="left:40.2px;top:377.9px;width:356.4px;height:1.0px;background:#8ea9db"></div>
<div class="t" style="left:43.3px;top:375.2px;font-size:13px;font-weight:bold;color:#000;transform:scaleX(0.860);transform-origin:0 0;">Total general</div>
<div class="t" style="left:222.3px;top:375.2px;font-size:13px;font-weight:bold;color:#000;transform:scaleX(0.860);transform-origin:0 0;">403</div>
<div class="t" style="left:362.9px;top:375.2px;font-size:13px;font-weight:bold;color:#000;transform:scaleX(0.860);transform-origin:0 0;">55791</div>
<div class="a" style="left:416.2px;top:229.3px;width:355.9px;height:16.2px;background:#d9e1f2"></div>
<div class="a" style="left:416.2px;top:244.5px;width:355.9px;height:1.0px;background:#8ea9db"></div>
<div class="t" style="left:418.9px;top:231.1px;font-size:13px;font-weight:bold;color:#000;transform:scaleX(0.866);transform-origin:0 0;">Etiquetas de fila</div>
<div class="a" style="left:508.0px;top:230.0px;width:12.5px;height:14.0px;background:#f7f8fb;border:1px solid #c9cfdb"></div>
<svg class="a" style="left:512px;top:235.5px;" width="6" height="3.5" viewBox="0 0 6 3.5"><path d="M0 0h6L3 3.5z" fill="#555"/></svg>
<div class="t" style="left:524.0px;top:231.1px;font-size:13px;font-weight:bold;color:#000;transform:scaleX(0.824);transform-origin:0 0;">Suma de VENTAS</div>
<div class="t" style="left:621.0px;top:231.1px;font-size:13px;font-weight:bold;color:#000;transform:scaleX(0.811);transform-origin:0 0;">Suma de VALOR DE VENTAS</div>
<div class="t" style="left:418.9px;top:242.8px;font-size:13px;color:#000;transform:scaleX(0.877);transform-origin:0 0;">Alberto</div>
<div class="t" style="left:610.5px;top:242.8px;font-size:13px;color:#000;transform:scaleX(0.877);transform-origin:0 0;">0</div>
<div class="t" style="left:763.5px;top:242.8px;font-size:13px;color:#000;transform:scaleX(0.877);transform-origin:0 0;">0</div>
<div class="t" style="left:418.9px;top:254.8px;font-size:13px;color:#000;transform:scaleX(0.877);transform-origin:0 0;">ANA</div>
<div class="t" style="left:604.1px;top:254.8px;font-size:13px;color:#000;transform:scaleX(0.877);transform-origin:0 0;">21</div>
<div class="t" style="left:741.3px;top:254.8px;font-size:13px;color:#000;transform:scaleX(0.877);transform-origin:0 0;">3.150</div>
<div class="t" style="left:418.9px;top:266.9px;font-size:13px;color:#000;transform:scaleX(0.877);transform-origin:0 0;">Angeles</div>
<div class="t" style="left:610.5px;top:266.9px;font-size:13px;color:#000;transform:scaleX(0.877);transform-origin:0 0;">7</div>
<div class="t" style="left:741.3px;top:266.9px;font-size:13px;color:#000;transform:scaleX(0.877);transform-origin:0 0;">1.050</div>
<div class="t" style="left:418.9px;top:278.9px;font-size:13px;color:#000;transform:scaleX(0.877);transform-origin:0 0;">Bárbara</div>
<div class="t" style="left:604.1px;top:278.9px;font-size:13px;color:#000;transform:scaleX(0.877);transform-origin:0 0;">56</div>
<div class="t" style="left:741.3px;top:278.9px;font-size:13px;color:#000;transform:scaleX(0.877);transform-origin:0 0;">8.391</div>
<div class="t" style="left:418.9px;top:291.0px;font-size:13px;color:#000;transform:scaleX(0.877);transform-origin:0 0;">Beatriz</div>
<div class="t" style="left:604.1px;top:291.0px;font-size:13px;color:#000;transform:scaleX(0.877);transform-origin:0 0;">12</div>
<div class="t" style="left:741.3px;top:291.0px;font-size:13px;color:#000;transform:scaleX(0.877);transform-origin:0 0;">1.800</div>
<div class="t" style="left:418.9px;top:303.0px;font-size:13px;color:#000;transform:scaleX(0.877);transform-origin:0 0;">Carla</div>
<div class="t" style="left:604.1px;top:303.0px;font-size:13px;color:#000;transform:scaleX(0.877);transform-origin:0 0;">76</div>
<div class="t" style="left:741.3px;top:303.0px;font-size:13px;color:#000;transform:scaleX(0.877);transform-origin:0 0;">5.850</div>
<div class="t" style="left:418.9px;top:315.0px;font-size:13px;color:#000;transform:scaleX(0.877);transform-origin:0 0;">Carlos</div>
<div class="t" style="left:610.5px;top:315.0px;font-size:13px;color:#000;transform:scaleX(0.877);transform-origin:0 0;">6</div>
<div class="t" style="left:750.8px;top:315.0px;font-size:13px;color:#000;transform:scaleX(0.877);transform-origin:0 0;">900</div>
<div class="t" style="left:418.9px;top:327.1px;font-size:13px;color:#000;transform:scaleX(0.877);transform-origin:0 0;">Carlota</div>
<div class="t" style="left:604.1px;top:327.1px;font-size:13px;color:#000;transform:scaleX(0.877);transform-origin:0 0;">24</div>
<div class="t" style="left:741.3px;top:327.1px;font-size:13px;color:#000;transform:scaleX(0.877);transform-origin:0 0;">3.600</div>
<div class="t" style="left:418.9px;top:339.1px;font-size:13px;color:#000;transform:scaleX(0.877);transform-origin:0 0;">Fernando</div>
<div class="t" style="left:604.1px;top:339.1px;font-size:13px;color:#000;transform:scaleX(0.877);transform-origin:0 0;">10</div>
<div class="t" style="left:741.3px;top:339.1px;font-size:13px;color:#000;transform:scaleX(0.877);transform-origin:0 0;">1.500</div>
<div class="t" style="left:418.9px;top:351.2px;font-size:13px;color:#000;transform:scaleX(0.877);transform-origin:0 0;">Francisco</div>
<div class="t" style="left:604.1px;top:351.2px;font-size:13px;color:#000;transform:scaleX(0.877);transform-origin:0 0;">18</div>
<div class="t" style="left:741.3px;top:351.2px;font-size:13px;color:#000;transform:scaleX(0.877);transform-origin:0 0;">2.700</div>
<div class="t" style="left:418.9px;top:363.2px;font-size:13px;color:#000;transform:scaleX(0.877);transform-origin:0 0;">Ines</div>
<div class="t" style="left:604.1px;top:363.2px;font-size:13px;color:#000;transform:scaleX(0.877);transform-origin:0 0;">19</div>
<div class="t" style="left:741.3px;top:363.2px;font-size:13px;color:#000;transform:scaleX(0.877);transform-origin:0 0;">2.850</div>
<div class="t" style="left:418.9px;top:375.2px;font-size:13px;color:#000;transform:scaleX(0.877);transform-origin:0 0;">Jorge</div>
<div class="t" style="left:610.5px;top:375.2px;font-size:13px;color:#000;transform:scaleX(0.877);transform-origin:0 0;">8</div>
<div class="t" style="left:741.3px;top:375.2px;font-size:13px;color:#000;transform:scaleX(0.877);transform-origin:0 0;">1.200</div>
<div class="t" style="left:418.9px;top:387.3px;font-size:13px;color:#000;transform:scaleX(0.877);transform-origin:0 0;">Juan</div>
<div class="t" style="left:610.5px;top:387.3px;font-size:13px;color:#000;transform:scaleX(0.877);transform-origin:0 0;">3</div>
<div class="t" style="left:750.8px;top:387.3px;font-size:13px;color:#000;transform:scaleX(0.877);transform-origin:0 0;">450</div>
<div class="t" style="left:418.9px;top:399.3px;font-size:13px;color:#000;transform:scaleX(0.877);transform-origin:0 0;">Manolo</div>
<div class="t" style="left:604.1px;top:399.3px;font-size:13px;color:#000;transform:scaleX(0.877);transform-origin:0 0;">16</div>
<div class="t" style="left:741.3px;top:399.3px;font-size:13px;color:#000;transform:scaleX(0.877);transform-origin:0 0;">2.400</div>
<div class="t" style="left:418.9px;top:411.4px;font-size:13px;color:#000;transform:scaleX(0.877);transform-origin:0 0;">Manuel</div>
<div class="t" style="left:610.5px;top:411.4px;font-size:13px;color:#000;transform:scaleX(0.877);transform-origin:0 0;">5</div>
<div class="t" style="left:750.8px;top:411.4px;font-size:13px;color:#000;transform:scaleX(0.877);transform-origin:0 0;">750</div>
<div class="t" style="left:418.9px;top:423.4px;font-size:13px;color:#000;transform:scaleX(0.877);transform-origin:0 0;">Maria</div>
<div class="t" style="left:604.1px;top:423.4px;font-size:13px;color:#000;transform:scaleX(0.877);transform-origin:0 0;">15</div>
<div class="t" style="left:741.3px;top:423.4px;font-size:13px;color:#000;transform:scaleX(0.877);transform-origin:0 0;">2.250</div>
<div class="t" style="left:418.9px;top:435.4px;font-size:13px;color:#000;transform:scaleX(0.877);transform-origin:0 0;">Marta</div>
<div class="t" style="left:604.1px;top:435.4px;font-size:13px;color:#000;transform:scaleX(0.877);transform-origin:0 0;">19</div>
<div class="t" style="left:741.3px;top:435.4px;font-size:13px;color:#000;transform:scaleX(0.877);transform-origin:0 0;">2.850</div>
<div class="t" style="left:418.9px;top:447.5px;font-size:13px;color:#000;transform:scaleX(0.877);transform-origin:0 0;">Paco</div>
<div class="t" style="left:604.1px;top:447.5px;font-size:13px;color:#000;transform:scaleX(0.877);transform-origin:0 0;">23</div>
<div class="t" style="left:741.3px;top:447.5px;font-size:13px;color:#000;transform:scaleX(0.877);transform-origin:0 0;">3.450</div>
<div class="t" style="left:418.9px;top:459.5px;font-size:13px;color:#000;transform:scaleX(0.877);transform-origin:0 0;">Pedro</div>
<div class="t" style="left:604.1px;top:459.5px;font-size:13px;color:#000;transform:scaleX(0.877);transform-origin:0 0;">30</div>
<div class="t" style="left:741.3px;top:459.5px;font-size:13px;color:#000;transform:scaleX(0.877);transform-origin:0 0;">5.400</div>
<div class="t" style="left:418.9px;top:471.6px;font-size:13px;color:#000;transform:scaleX(0.877);transform-origin:0 0;">Pepe</div>
<div class="t" style="left:604.1px;top:471.6px;font-size:13px;color:#000;transform:scaleX(0.877);transform-origin:0 0;">15</div>
<div class="t" style="left:741.3px;top:471.6px;font-size:13px;color:#000;transform:scaleX(0.877);transform-origin:0 0;">2.250</div>
<div class="t" style="left:418.9px;top:483.6px;font-size:13px;color:#000;transform:scaleX(0.877);transform-origin:0 0;">Victoria</div>
<div class="t" style="left:604.1px;top:483.6px;font-size:13px;color:#000;transform:scaleX(0.877);transform-origin:0 0;">20</div>
<div class="t" style="left:741.3px;top:483.6px;font-size:13px;color:#000;transform:scaleX(0.877);transform-origin:0 0;">3.000</div>
<div class="a" style="left:416.2px;top:498.3px;width:355.9px;height:12.0px;background:#d9e1f2"></div>
<div class="a" style="left:416.2px;top:498.3px;width:355.9px;height:1.0px;background:#8ea9db"></div>
<div class="t" style="left:418.9px;top:495.6px;font-size:13px;font-weight:bold;color:#000;transform:scaleX(0.860);transform-origin:0 0;">Total general</div>
<div class="t" style="left:598.1px;top:495.6px;font-size:13px;font-weight:bold;color:#000;transform:scaleX(0.860);transform-origin:0 0;">403</div>
<div class="t" style="left:735.6px;top:495.6px;font-size:13px;font-weight:bold;color:#000;transform:scaleX(0.860);transform-origin:0 0;">55.791</div>
<div class="a" style="left:801.2px;top:228.2px;width:165.8px;height:228.6px;border:1.8px solid #4a6fb5;background:transparent"></div>
<div class="t" style="left:809.0px;top:234.7px;font-size:11.5px;font-weight:bold;color:#000;transform:scaleX(0.846);transform-origin:0 0;">FECHAS</div>
<svg class="a" style="left:914px;top:233px;" width="16" height="14" viewBox="0 0 16 14"><g fill="none" stroke="#444" stroke-width="1.1"><path d="M1 2.5l2 2 3-4M1 7l2 2 3-4M1 11.5l2 2 3-4"/><path d="M8 3h7M8 7.5h7M8 12h7"/></g></svg>
<svg class="a" style="left:942px;top:233px;" width="15" height="15" viewBox="0 0 15 15"><g fill="none" stroke="#b8b8b8" stroke-width="1.1"><path d="M0.5 0.5h13l-5 6v6l-3-2v-4z"/></g><path d="M9.5 9.5l5 5M14.5 9.5l-5 5" stroke="#b8b8b8" stroke-width="1.1"/></svg>
<div class="a" style="left:809.0px;top:251.0px;width:149.5px;height:1.2px;background:#4a6fb5"></div>
<div class="a" style="left:808.6px;top:255.5px;width:149.6px;height:21.0px;background:#b4c6e7;border:1px solid #a9b6cc;border-bottom:1.5px solid #9aa3b3;border-radius:3px"></div>
<div class="t" style="left:816.4px;top:260.1px;font-size:12.5px;color:#111;transform:scaleX(0.870);transform-origin:0 0;">2020</div>
<div class="a" style="left:808.6px;top:279.7px;width:149.6px;height:21.0px;background:#b4c6e7;border:1px solid #a9b6cc;border-bottom:1.5px solid #9aa3b3;border-radius:3px"></div>
<div class="t" style="left:816.4px;top:284.2px;font-size:12.5px;color:#111;transform:scaleX(0.870);transform-origin:0 0;">2021</div>
<div class="a" style="left:808.6px;top:303.9px;width:149.6px;height:21.0px;background:#b4c6e7;border:1px solid #a9b6cc;border-bottom:1.5px solid #9aa3b3;border-radius:3px"></div>
<div class="t" style="left:816.4px;top:308.4px;font-size:12.5px;color:#111;transform:scaleX(0.870);transform-origin:0 0;">2022</div>
<div class="a" style="left:797.5px;top:224.5px;width:9px;height:9px;border-radius:50%;background:#fff;border:1.3px solid #5f5f5f"></div>
<div class="a" style="left:879.5px;top:224.5px;width:9px;height:9px;border-radius:50%;background:#fff;border:1.3px solid #5f5f5f"></div>
<div class="a" style="left:961.7px;top:224.5px;width:9px;height:9px;border-radius:50%;background:#fff;border:1.3px solid #5f5f5f"></div>
<div class="a" style="left:797.5px;top:338.2px;width:9px;height:9px;border-radius:50%;background:#fff;border:1.3px solid #5f5f5f"></div>
<div class="a" style="left:961.7px;top:338.2px;width:9px;height:9px;border-radius:50%;background:#fff;border:1.3px solid #5f5f5f"></div>
<div class="a" style="left:797.5px;top:451.5px;width:9px;height:9px;border-radius:50%;background:#fff;border:1.3px solid #5f5f5f"></div>
<div class="a" style="left:879.5px;top:451.5px;width:9px;height:9px;border-radius:50%;background:#fff;border:1.3px solid #5f5f5f"></div>
<div class="a" style="left:961.7px;top:451.5px;width:9px;height:9px;border-radius:50%;background:#fff;border:1.3px solid #5f5f5f"></div>
<div class="a" style="left:35.2px;top:515.3px;width:375.4px;height:280.9px;border:1px solid #d9d9d9;background:radial-gradient(ellipse 95% 110% at 60% 5%, #fbfbfb 0%, #e6e6e6 42%, #c6c6c6 100%)"></div>
<div class="a" style="left:45.2px;top:522.8px;width:75.8px;height:13.5px;background:linear-gradient(#dedede,#cdcdcd)"></div>
<div class="t" style="left:48.2px;top:524.3px;font-size:11px;color:#222;transform:scaleX(0.762);transform-origin:0 0;">Suma de VENTAS</div>
<div class="a" style="left:122.7px;top:522.8px;width:122.0px;height:13.5px;background:linear-gradient(#dedede,#cdcdcd)"></div>
<div class="t" style="left:125.7px;top:524.3px;font-size:11px;color:#222;transform:scaleX(0.776);transform-origin:0 0;">Suma de VALOR DE VENTAS</div>
<div class="a" style="left:42.0px;top:660.0px;width:83.0px;height:13.0px;background:linear-gradient(#dedede,#cdcdcd)"></div>
<div class="t" style="left:45.0px;top:661.3px;font-size:11px;color:#222;transform:scaleX(0.714);transform-origin:0 0;">DELEGACIONES</div>
<svg class="a" style="left:112px;top:665.0px;" width="7" height="4" viewBox="0 0 7 4"><path d="M0 0h7L3.5 4z" fill="#333"/></svg>
<div class="a" style="left:272.9px;top:551.0px;width:1.0px;height:231.6px;background:#959595"></div>
<div class="a" style="left:334.9px;top:551.0px;width:1.0px;height:231.6px;background:#959595"></div>
<div class="a" style="left:396.5px;top:551.0px;width:1.0px;height:231.6px;background:#959595"></div>
<div class="t" style="left:139.3px;top:556.5px;font-size:9px;color:#404040;transform:scaleX(0.940);transform-origin:0 0;">DELEGACIÓN 9</div>
<div class="a" style="left:211.4px;top:555.5px;width:33.5px;height:5.5px;background:#ed7d31"></div>
<div class="t" style="left:218.9px;top:552.5px;font-size:11px;color:#fff;transform:scaleX(0.860);transform-origin:0 0;">2700</div>
<div class="t" style="left:217.9px;top:559.3px;font-size:11px;color:#fff;transform:scaleX(0.860);transform-origin:0 0;">18</div>
<div class="t" style="left:139.3px;top:577.6px;font-size:9px;color:#404040;transform:scaleX(0.940);transform-origin:0 0;">DELEGACIÓN 8</div>
<div class="a" style="left:211.4px;top:576.6px;width:176.6px;height:5.5px;background:#ed7d31"></div>
<div class="t" style="left:286.5px;top:573.6px;font-size:11px;color:#fff;transform:scaleX(0.860);transform-origin:0 0;">14241</div>
<div class="t" style="left:215.3px;top:580.4px;font-size:11px;color:#fff;transform:scaleX(0.860);transform-origin:0 0;">132</div>
<div class="t" style="left:139.3px;top:598.7px;font-size:9px;color:#404040;transform:scaleX(0.940);transform-origin:0 0;">DELEGACIÓN 7</div>
<div class="a" style="left:211.4px;top:597.7px;width:35.3px;height:5.5px;background:#ed7d31"></div>
<div class="t" style="left:218.9px;top:594.7px;font-size:11px;color:#fff;transform:scaleX(0.860);transform-origin:0 0;">2850</div>
<div class="t" style="left:217.9px;top:601.5px;font-size:11px;color:#fff;transform:scaleX(0.860);transform-origin:0 0;">19</div>
<div class="t" style="left:139.3px;top:619.7px;font-size:9px;color:#404040;transform:scaleX(0.940);transform-origin:0 0;">DELEGACIÓN 6</div>
<div class="a" style="left:211.4px;top:618.7px;width:65.1px;height:5.5px;background:#ed7d31"></div>
<div class="t" style="left:233.4px;top:615.7px;font-size:11px;color:#fff;transform:scaleX(0.860);transform-origin:0 0;">5250</div>
<div class="t" style="left:217.9px;top:622.5px;font-size:11px;color:#fff;transform:scaleX(0.860);transform-origin:0 0;">35</div>
<div class="t" style="left:139.3px;top:640.8px;font-size:9px;color:#404040;transform:scaleX(0.940);transform-origin:0 0;">DELEGACIÓN 5</div>
<div class="a" style="left:211.4px;top:639.8px;width:48.4px;height:5.5px;background:#ed7d31"></div>
<div class="t" style="left:225.1px;top:636.8px;font-size:11px;color:#fff;transform:scaleX(0.860);transform-origin:0 0;">3900</div>
<div class="t" style="left:217.9px;top:643.6px;font-size:11px;color:#fff;transform:scaleX(0.860);transform-origin:0 0;">26</div>
<div class="t" style="left:139.3px;top:661.9px;font-size:9px;color:#404040;transform:scaleX(0.940);transform-origin:0 0;">DELEGACIÓN 4</div>
<div class="a" style="left:211.4px;top:660.9px;width:83.7px;height:5.5px;background:#ed7d31"></div>
<div class="t" style="left:242.7px;top:657.9px;font-size:11px;color:#fff;transform:scaleX(0.860);transform-origin:0 0;">6750</div>
<div class="t" style="left:217.9px;top:664.7px;font-size:11px;color:#fff;transform:scaleX(0.860);transform-origin:0 0;">45</div>
<div class="t" style="left:139.3px;top:683.0px;font-size:9px;color:#404040;transform:scaleX(0.940);transform-origin:0 0;">DELEGACIÓN 3</div>
<div class="a" style="left:211.4px;top:682.0px;width:27.9px;height:5.5px;background:#ed7d31"></div>
<div class="t" style="left:218.9px;top:679.0px;font-size:11px;color:#fff;transform:scaleX(0.860);transform-origin:0 0;">2250</div>
<div class="t" style="left:217.9px;top:685.8px;font-size:11px;color:#fff;transform:scaleX(0.860);transform-origin:0 0;">15</div>
<div class="t" style="left:139.3px;top:704.1px;font-size:9px;color:#404040;transform:scaleX(0.940);transform-origin:0 0;">DELEGACIÓN 2</div>
<div class="a" style="left:211.4px;top:703.1px;width:20.5px;height:5.5px;background:#ed7d31"></div>
<div class="t" style="left:218.9px;top:700.1px;font-size:11px;color:#fff;transform:scaleX(0.860);transform-origin:0 0;">1650</div>
<div class="t" style="left:218.3px;top:706.9px;font-size:11px;color:#fff;transform:scaleX(0.860);transform-origin:0 0;">11</div>
<div class="t" style="left:135.2px;top:725.1px;font-size:9px;color:#404040;transform:scaleX(0.940);transform-origin:0 0;">DELEGACIÓN 11</div>
<div class="a" style="left:211.4px;top:724.1px;width:67.0px;height:5.5px;background:#ed7d31"></div>
<div class="t" style="left:234.4px;top:721.1px;font-size:11px;color:#fff;transform:scaleX(0.860);transform-origin:0 0;">5400</div>
<div class="t" style="left:217.9px;top:727.9px;font-size:11px;color:#fff;transform:scaleX(0.860);transform-origin:0 0;">30</div>
<div class="t" style="left:134.6px;top:746.2px;font-size:9px;color:#404040;transform:scaleX(0.940);transform-origin:0 0;">DELEGACIÓN 10</div>
<div class="a" style="left:211.4px;top:745.2px;width:70.7px;height:5.5px;background:#ed7d31"></div>
<div class="t" style="left:236.2px;top:742.2px;font-size:11px;color:#fff;transform:scaleX(0.860);transform-origin:0 0;">5700</div>
<div class="t" style="left:217.9px;top:749.0px;font-size:11px;color:#fff;transform:scaleX(0.860);transform-origin:0 0;">38</div>
<div class="t" style="left:139.3px;top:767.3px;font-size:9px;color:#404040;transform:scaleX(0.940);transform-origin:0 0;">DELEGACIÓN 1</div>
<div class="a" style="left:211.4px;top:766.3px;width:63.2px;height:5.5px;background:#ed7d31"></div>
<div class="t" style="left:232.5px;top:763.3px;font-size:11px;color:#fff;transform:scaleX(0.860);transform-origin:0 0;">5100</div>
<div class="t" style="left:217.9px;top:770.1px;font-size:11px;color:#fff;transform:scaleX(0.860);transform-origin:0 0;">34</div>
<div class="a" style="left:210.4px;top:551.0px;width:2.0px;height:231.6px;background:#404040"></div>
<div class="a" style="left:418px;top:516.3px;width:412.6px;height:278.7px;border:1px solid #d9d9d9;background:radial-gradient(ellipse 90% 105% at 58% 5%, #fbfbfb 0%, #e6e6e6 42%, #c6c6c6 100%)"></div>
<div class="a" style="left:427.8px;top:523.7px;width:75.8px;height:13.6px;background:linear-gradient(#dedede,#cdcdcd)"></div>
<div class="t" style="left:430.8px;top:525.3px;font-size:11px;color:#222;transform:scaleX(0.762);transform-origin:0 0;">Suma de VENTAS</div>
<div class="a" style="left:505.2px;top:523.7px;width:121.8px;height:13.6px;background:linear-gradient(#dedede,#cdcdcd)"></div>
<div class="t" style="left:508.2px;top:525.3px;font-size:11px;color:#222;transform:scaleX(0.775);transform-origin:0 0;">Suma de VALOR DE VENTAS</div>
<div class="a" style="left:427.8px;top:773.0px;width:74.8px;height:13.0px;background:linear-gradient(#dedede,#cdcdcd)"></div>
<div class="t" style="left:430.8px;top:774.3px;font-size:11px;color:#222;transform:scaleX(0.699);transform-origin:0 0;">VENDEDORES</div>
<svg class="a" style="left:489.6px;top:778.0px;" width="7" height="4" viewBox="0 0 7 4"><path d="M0 0h7L3.5 4z" fill="#333"/></svg>
<div class="a" style="left:448.0px;top:694.7px;width:369.6px;height:1.2px;background:rgb(138,138,138)"></div>
<div class="a" style="left:448.0px;top:676.7px;width:369.6px;height:1.2px;background:rgb(142,142,142)"></div>
<div class="a" style="left:448.0px;top:658.8px;width:369.6px;height:1.2px;background:rgb(160,160,160)"></div>
<div class="a" style="left:448.0px;top:640.9px;width:369.6px;height:1.2px;background:rgb(184,184,184)"></div>
<div class="a" style="left:448.0px;top:623.0px;width:369.6px;height:1.2px;background:rgb(207,207,207)"></div>
<div class="a" style="left:448.0px;top:605.0px;width:369.6px;height:1.2px;background:rgb(216,216,216)"></div>
<div class="a" style="left:448.0px;top:587.1px;width:369.6px;height:1.2px;background:rgb(220,220,220)"></div>
<div class="a" style="left:448.0px;top:569.2px;width:369.6px;height:1.2px;background:rgb(224,224,224)"></div>
<div class="a" style="left:448.0px;top:551.2px;width:369.6px;height:1.2px;background:rgb(232,232,232)"></div>
<svg class="a" style="left:418px;top:516px;" width="413" height="279" viewBox="0 0 413 279"><circle cx="38.8" cy="197.2" r="9.7" fill="#4472c4"/><circle cx="56.4" cy="197.2" r="9.7" fill="#4472c4"/><circle cx="74.1" cy="197.2" r="9.7" fill="#4472c4"/><circle cx="91.7" cy="197.2" r="9.7" fill="#4472c4"/><circle cx="109.3" cy="197.2" r="9.7" fill="#4472c4"/><circle cx="126.9" cy="197.2" r="9.7" fill="#4472c4"/><circle cx="144.5" cy="197.2" r="9.7" fill="#4472c4"/><circle cx="162.2" cy="197.2" r="9.7" fill="#4472c4"/><circle cx="179.8" cy="197.2" r="9.7" fill="#4472c4"/><circle cx="197.4" cy="197.2" r="9.7" fill="#4472c4"/><circle cx="215.0" cy="197.2" r="9.7" fill="#4472c4"/><circle cx="232.7" cy="197.2" r="9.7" fill="#4472c4"/><circle cx="250.3" cy="197.2" r="9.7" fill="#4472c4"/><circle cx="267.9" cy="197.2" r="9.7" fill="#4472c4"/><circle cx="285.5" cy="197.2" r="9.7" fill="#4472c4"/><circle cx="303.2" cy="197.2" r="9.7" fill="#4472c4"/><circle cx="320.8" cy="197.2" r="9.7" fill="#4472c4"/><circle cx="338.4" cy="197.2" r="9.7" fill="#4472c4"/><circle cx="356.0" cy="197.2" r="9.7" fill="#4472c4"/><circle cx="373.7" cy="197.2" r="9.7" fill="#4472c4"/><circle cx="391.3" cy="197.2" r="9.7" fill="#4472c4"/><polyline points="38.8,197.2 56.4,140.7 74.1,178.4 91.7,46.7 109.3,164.9 126.9,92.3 144.5,181.1 162.2,132.7 179.8,170.3 197.4,148.8 215.0,146.1 232.7,175.7 250.3,189.1 267.9,154.2 285.5,183.8 303.2,156.9 320.8,146.1 338.4,135.3 356.0,100.4 373.7,156.9 391.3,143.4" fill="none" stroke="#ed7d31" stroke-width="2.8" stroke-linejoin="round"/><circle cx="38.8" cy="197.2" r="9.7" fill="#ed7d31"/><circle cx="56.4" cy="140.7" r="9.7" fill="#ed7d31"/><circle cx="74.1" cy="178.4" r="9.7" fill="#ed7d31"/><circle cx="91.7" cy="46.7" r="9.7" fill="#ed7d31"/><circle cx="109.3" cy="164.9" r="9.7" fill="#ed7d31"/><circle cx="126.9" cy="92.3" r="9.7" fill="#ed7d31"/><circle cx="144.5" cy="181.1" r="9.7" fill="#ed7d31"/><circle cx="162.2" cy="132.7" r="9.7" fill="#ed7d31"/><circle cx="179.8" cy="170.3" r="9.7" fill="#ed7d31"/><circle cx="197.4" cy="148.8" r="9.7" fill="#ed7d31"/><circle cx="215.0" cy="146.1" r="9.7" fill="#ed7d31"/><circle cx="232.7" cy="175.7" r="9.7" fill="#ed7d31"/><circle cx="250.3" cy="189.1" r="9.7" fill="#ed7d31"/><circle cx="267.9" cy="154.2" r="9.7" fill="#ed7d31"/><circle cx="285.5" cy="183.8" r="9.7" fill="#ed7d31"/><circle cx="303.2" cy="156.9" r="9.7" fill="#ed7d31"/><circle cx="320.8" cy="146.1" r="9.7" fill="#ed7d31"/><circle cx="338.4" cy="135.3" r="9.7" fill="#ed7d31"/><circle cx="356.0" cy="100.4" r="9.7" fill="#ed7d31"/><circle cx="373.7" cy="156.9" r="9.7" fill="#ed7d31"/><circle cx="391.3" cy="143.4" r="9.7" fill="#ed7d31"/></svg>
<div class="t" style="left:454.1px;top:708.0px;font-size:11.5px;font-weight:bold;color:#fff;transform:scaleX(0.850);transform-origin:0 0;">0</div>
<div class="t" style="left:469.0px;top:708.0px;font-size:11.5px;font-weight:bold;color:#fff;transform:scaleX(0.850);transform-origin:0 0;">21</div>
<div class="t" style="left:489.3px;top:708.0px;font-size:11.5px;font-weight:bold;color:#fff;transform:scaleX(0.850);transform-origin:0 0;">7</div>
<div class="t" style="left:504.2px;top:708.0px;font-size:11.5px;font-weight:bold;color:#fff;transform:scaleX(0.850);transform-origin:0 0;">56</div>
<div class="t" style="left:521.9px;top:708.0px;font-size:11.5px;font-weight:bold;color:#fff;transform:scaleX(0.850);transform-origin:0 0;">12</div>
<div class="t" style="left:539.5px;top:708.0px;font-size:11.5px;font-weight:bold;color:#fff;transform:scaleX(0.850);transform-origin:0 0;">76</div>
<div class="t" style="left:559.8px;top:708.0px;font-size:11.5px;font-weight:bold;color:#fff;transform:scaleX(0.850);transform-origin:0 0;">6</div>
<div class="t" style="left:574.7px;top:708.0px;font-size:11.5px;font-weight:bold;color:#fff;transform:scaleX(0.850);transform-origin:0 0;">24</div>
<div class="t" style="left:592.4px;top:708.0px;font-size:11.5px;font-weight:bold;color:#fff;transform:scaleX(0.850);transform-origin:0 0;">10</div>
<div class="t" style="left:610.0px;top:708.0px;font-size:11.5px;font-weight:bold;color:#fff;transform:scaleX(0.850);transform-origin:0 0;">18</div>
<div class="t" style="left:627.6px;top:708.0px;font-size:11.5px;font-weight:bold;color:#fff;transform:scaleX(0.850);transform-origin:0 0;">19</div>
<div class="t" style="left:648.0px;top:708.0px;font-size:11.5px;font-weight:bold;color:#fff;transform:scaleX(0.850);transform-origin:0 0;">8</div>
<div class="t" style="left:665.6px;top:708.0px;font-size:11.5px;font-weight:bold;color:#fff;transform:scaleX(0.850);transform-origin:0 0;">3</div>
<div class="t" style="left:680.5px;top:708.0px;font-size:11.5px;font-weight:bold;color:#fff;transform:scaleX(0.850);transform-origin:0 0;">16</div>
<div class="t" style="left:700.8px;top:708.0px;font-size:11.5px;font-weight:bold;color:#fff;transform:scaleX(0.850);transform-origin:0 0;">5</div>
<div class="t" style="left:715.7px;top:708.0px;font-size:11.5px;font-weight:bold;color:#fff;transform:scaleX(0.850);transform-origin:0 0;">15</div>
<div class="t" style="left:733.4px;top:708.0px;font-size:11.5px;font-weight:bold;color:#fff;transform:scaleX(0.850);transform-origin:0 0;">19</div>
<div class="t" style="left:751.0px;top:708.0px;font-size:11.5px;font-weight:bold;color:#fff;transform:scaleX(0.850);transform-origin:0 0;">23</div>
<div class="t" style="left:768.6px;top:708.0px;font-size:11.5px;font-weight:bold;color:#fff;transform:scaleX(0.850);transform-origin:0 0;">30</div>
<div class="t" style="left:786.2px;top:708.0px;font-size:11.5px;font-weight:bold;color:#fff;transform:scaleX(0.850);transform-origin:0 0;">15</div>
<div class="t" style="left:803.9px;top:708.0px;font-size:11.5px;font-weight:bold;color:#fff;transform:scaleX(0.850);transform-origin:0 0;">20</div>
<div class="t" style="left:454.1px;top:708.0px;font-size:11.5px;font-weight:bold;color:#fff;transform:scaleX(0.850);transform-origin:0 0;">0</div>
<div class="t" style="left:462.2px;top:651.5px;font-size:11.5px;font-weight:bold;color:#fff;transform:scaleX(0.850);transform-origin:0 0;">3.150</div>
<div class="t" style="left:479.8px;top:689.1px;font-size:11.5px;font-weight:bold;color:#fff;transform:scaleX(0.850);transform-origin:0 0;">1.050</div>
<div class="t" style="left:497.4px;top:557.5px;font-size:11.5px;font-weight:bold;color:#fff;transform:scaleX(0.850);transform-origin:0 0;">8.391</div>
<div class="t" style="left:515.1px;top:675.7px;font-size:11.5px;font-weight:bold;color:#fff;transform:scaleX(0.850);transform-origin:0 0;">1.800</div>
<div class="t" style="left:532.7px;top:603.1px;font-size:11.5px;font-weight:bold;color:#fff;transform:scaleX(0.850);transform-origin:0 0;">5.850</div>
<div class="t" style="left:554.4px;top:691.8px;font-size:11.5px;font-weight:bold;color:#fff;transform:scaleX(0.850);transform-origin:0 0;">900</div>
<div class="t" style="left:567.9px;top:643.4px;font-size:11.5px;font-weight:bold;color:#fff;transform:scaleX(0.850);transform-origin:0 0;">3.600</div>
<div class="t" style="left:585.6px;top:681.1px;font-size:11.5px;font-weight:bold;color:#fff;transform:scaleX(0.850);transform-origin:0 0;">1.500</div>
<div class="t" style="left:603.2px;top:659.5px;font-size:11.5px;font-weight:bold;color:#fff;transform:scaleX(0.850);transform-origin:0 0;">2.700</div>
<div class="t" style="left:620.8px;top:656.8px;font-size:11.5px;font-weight:bold;color:#fff;transform:scaleX(0.850);transform-origin:0 0;">2.850</div>
<div class="t" style="left:638.4px;top:686.4px;font-size:11.5px;font-weight:bold;color:#fff;transform:scaleX(0.850);transform-origin:0 0;">1.200</div>
<div class="t" style="left:660.1px;top:699.9px;font-size:11.5px;font-weight:bold;color:#fff;transform:scaleX(0.850);transform-origin:0 0;">450</div>
<div class="t" style="left:673.7px;top:664.9px;font-size:11.5px;font-weight:bold;color:#fff;transform:scaleX(0.850);transform-origin:0 0;">2.400</div>
<div class="t" style="left:695.4px;top:694.5px;font-size:11.5px;font-weight:bold;color:#fff;transform:scaleX(0.850);transform-origin:0 0;">750</div>
<div class="t" style="left:708.9px;top:667.6px;font-size:11.5px;font-weight:bold;color:#fff;transform:scaleX(0.850);transform-origin:0 0;">2.250</div>
<div class="t" style="left:726.6px;top:656.8px;font-size:11.5px;font-weight:bold;color:#fff;transform:scaleX(0.850);transform-origin:0 0;">2.850</div>
<div class="t" style="left:744.2px;top:646.1px;font-size:11.5px;font-weight:bold;color:#fff;transform:scaleX(0.850);transform-origin:0 0;">3.450</div>
<div class="t" style="left:761.8px;top:611.1px;font-size:11.5px;font-weight:bold;color:#fff;transform:scaleX(0.850);transform-origin:0 0;">5.400</div>
<div class="t" style="left:779.4px;top:667.6px;font-size:11.5px;font-weight:bold;color:#fff;transform:scaleX(0.850);transform-origin:0 0;">2.250</div>
<div class="t" style="left:797.1px;top:654.2px;font-size:11.5px;font-weight:bold;color:#fff;transform:scaleX(0.850);transform-origin:0 0;">3.000</div>
<div class="t" style="left:418.7px;top:721.2px;font-size:9.2px;color:#404040;width:40.1px;transform-origin:100% 85%;transform:rotate(-45deg) scaleX(0.94)">ALBERTO</div>
<div class="t" style="left:458.6px;top:721.2px;font-size:9.2px;color:#404040;width:17.8px;transform-origin:100% 85%;transform:rotate(-45deg) scaleX(0.94)">ANA</div>
<div class="t" style="left:453.2px;top:721.2px;font-size:9.2px;color:#404040;width:40.9px;transform-origin:100% 85%;transform:rotate(-45deg) scaleX(0.94)">ANGELES</div>
<div class="t" style="left:470.3px;top:721.2px;font-size:9.2px;color:#404040;width:41.3px;transform-origin:100% 85%;transform:rotate(-45deg) scaleX(0.94)">BÁRBARA</div>
<div class="t" style="left:493.4px;top:721.2px;font-size:9.2px;color:#404040;width:35.9px;transform-origin:100% 85%;transform:rotate(-45deg) scaleX(0.94)">BEATRIZ</div>
<div class="t" style="left:518.1px;top:721.2px;font-size:9.2px;color:#404040;width:28.8px;transform-origin:100% 85%;transform:rotate(-45deg) scaleX(0.94)">CARLA</div>
<div class="t" style="left:529.0px;top:721.2px;font-size:9.2px;color:#404040;width:35.6px;transform-origin:100% 85%;transform:rotate(-45deg) scaleX(0.94)">CARLOS</div>
<div class="t" style="left:542.0px;top:721.2px;font-size:9.2px;color:#404040;width:40.2px;transform-origin:100% 85%;transform:rotate(-45deg) scaleX(0.94)">CARLOTA</div>
<div class="t" style="left:551.3px;top:721.2px;font-size:9.2px;color:#404040;width:48.5px;transform-origin:100% 85%;transform:rotate(-45deg) scaleX(0.94)">FERNANDO</div>
<div class="t" style="left:566.5px;top:721.2px;font-size:9.2px;color:#404040;width:50.9px;transform-origin:100% 85%;transform:rotate(-45deg) scaleX(0.94)">FRANCISCO</div>
<div class="t" style="left:614.9px;top:721.2px;font-size:9.2px;color:#404040;width:20.2px;transform-origin:100% 85%;transform:rotate(-45deg) scaleX(0.94)">INES</div>
<div class="t" style="left:622.9px;top:721.2px;font-size:9.2px;color:#404040;width:29.8px;transform-origin:100% 85%;transform:rotate(-45deg) scaleX(0.94)">JORGE</div>
<div class="t" style="left:647.7px;top:721.2px;font-size:9.2px;color:#404040;width:22.6px;transform-origin:100% 85%;transform:rotate(-45deg) scaleX(0.94)">JUAN</div>
<div class="t" style="left:650.4px;top:721.2px;font-size:9.2px;color:#404040;width:37.5px;transform-origin:100% 85%;transform:rotate(-45deg) scaleX(0.94)">MANOLO</div>
<div class="t" style="left:669.5px;top:721.2px;font-size:9.2px;color:#404040;width:36.0px;transform-origin:100% 85%;transform:rotate(-45deg) scaleX(0.94)">MANUEL</div>
<div class="t" style="left:695.8px;top:721.2px;font-size:9.2px;color:#404040;width:27.4px;transform-origin:100% 85%;transform:rotate(-45deg) scaleX(0.94)">MARIA</div>
<div class="t" style="left:711.3px;top:721.2px;font-size:9.2px;color:#404040;width:29.5px;transform-origin:100% 85%;transform:rotate(-45deg) scaleX(0.94)">MARTA</div>
<div class="t" style="left:734.6px;top:721.2px;font-size:9.2px;color:#404040;width:23.9px;transform-origin:100% 85%;transform:rotate(-45deg) scaleX(0.94)">PACO</div>
<div class="t" style="left:745.3px;top:721.2px;font-size:9.2px;color:#404040;width:30.8px;transform-origin:100% 85%;transform:rotate(-45deg) scaleX(0.94)">PEDRO</div>
<div class="t" style="left:770.6px;top:721.2px;font-size:9.2px;color:#404040;width:23.1px;transform-origin:100% 85%;transform:rotate(-45deg) scaleX(0.94)">PEPE</div>
<div class="t" style="left:770.6px;top:721.2px;font-size:9.2px;color:#404040;width:40.7px;transform-origin:100% 85%;transform:rotate(-45deg) scaleX(0.94)">VICTORIA</div>
<div class="a" style="left:902.2px;top:374px;width:243.0px;height:465.8px;background:#fff;border:1px solid #c8c8c8;box-shadow:2px 2px 3px rgba(0,0,0,0.18)"></div>
<div class="t" style="left:936.3px;top:382.1px;font-size:11.5px;color:#262626;transform:scaleX(0.898);transform-origin:0 0;">Cor<u style="text-underline-offset:1.5px">t</u>ar</div>
<svg class="a" style="left:917px;top:380px;" width="10" height="15" viewBox="0 0 10 15"><g fill="none" stroke="#555" stroke-width="1"><path d="M1.5 0.5L7 10M8.5 0.5L3 10"/></g><circle cx="2.5" cy="12" r="1.7" fill="none" stroke="#2b88d8" stroke-width="1.2"/><circle cx="7.5" cy="12" r="1.7" fill="none" stroke="#2b88d8" stroke-width="1.2"/></svg>
<div class="t" style="left:936.3px;top:405.9px;font-size:11.5px;color:#262626;transform:scaleX(0.877);transform-origin:0 0;"><u style="text-underline-offset:1.5px">C</u>opiar</div>
<svg class="a" style="left:914px;top:404px;" width="15" height="15" viewBox="0 0 15 15"><g fill="none" stroke="#555" stroke-width="1"><path d="M5.5 2H0.5v10h5"/><rect x="5.5" y="3.5" width="8" height="11"/><path d="M7.5 8h4M7.5 10h4M7.5 12h4"/></g></svg>
<div class="t" style="left:936.3px;top:432.1px;font-size:11.5px;font-weight:bold;color:#262626;transform:scaleX(0.853);transform-origin:0 0;">Opciones de pegado:</div>
<svg class="a" style="left:913px;top:428px;" width="16" height="17" viewBox="0 0 16 17"><path d="M1 3.5h12v13H1z" fill="none" stroke="#e8962c" stroke-width="1.2"/><rect x="4.5" y="1" width="5" height="3.5" fill="#fff" stroke="#777"/><rect x="7" y="8" width="7.5" height="8.5" fill="#fff" stroke="#444" stroke-width="1"/></svg>
<svg class="a" style="left:937px;top:453px;" width="18" height="20" viewBox="0 0 18 20"><path d="M1 4h13v15H1z" fill="none" stroke="#e8962c" stroke-width="1.3"/><rect x="5" y="1" width="5" height="4" fill="#fff" stroke="#777"/><rect x="8" y="9" width="9" height="10" fill="#fff" stroke="#444" stroke-width="1"/></svg>
<div class="a" style="left:931.7px;top:479.6px;width:212.3px;height:1.0px;background:#e1e1e1"></div>
<div class="a" style="left:931.7px;top:506.5px;width:212.3px;height:1.0px;background:#e1e1e1"></div>
<div class="a" style="left:931.7px;top:556.3px;width:212.3px;height:1.0px;background:#e1e1e1"></div>
<div class="a" style="left:931.7px;top:583.5px;width:212.3px;height:1.0px;background:#e1e1e1"></div>
<div class="a" style="left:931.7px;top:610.4px;width:212.3px;height:1.0px;background:#e1e1e1"></div>
<div class="a" style="left:931.7px;top:636.3px;width:212.3px;height:1.0px;background:#e1e1e1"></div>
<div class="a" style="left:931.7px;top:663.3px;width:212.3px;height:1.0px;background:#e1e1e1"></div>
<div class="a" style="left:931.7px;top:738.6px;width:212.3px;height:1.0px;background:#e1e1e1"></div>
<div class="a" style="left:931.7px;top:764.7px;width:212.3px;height:1.0px;background:#e1e1e1"></div>
<div class="t" style="left:936.3px;top:486.8px;font-size:11.5px;color:#262626;transform:scaleX(0.885);transform-origin:0 0;">Actuali<u style="text-underline-offset:1.5px">z</u>ar</div>
<svg class="a" style="left:914px;top:484px;" width="16" height="17" viewBox="0 0 16 17"><g fill="none" stroke="#444" stroke-width="1"><path d="M0.5 0.5h7l3 3v5M6 15.5H0.5V0.5"/><path d="M7.5 0.5v3h3"/></g><g fill="none" stroke="#3aa655" stroke-width="1.2"><path d="M8 10a3.5 3.5 0 0 1 6-1M14.5 13a3.5 3.5 0 0 1-6 1"/></g></svg>
<div class="a" style="left:912.3px;top:510.5px;width:17.5px;height:17.0px;background:#c8c8c8"></div>
<svg class="a" style="left:913px;top:511px;" width="17" height="16" viewBox="0 0 17 16"><text x="1" y="7.5" font-size="8" fill="#2b88d8" font-family="Liberation Sans">A</text><text x="1" y="15.5" font-size="8" fill="#333" font-family="Liberation Sans">Z</text><path d="M12 1v13M9 11l3 3 3-3" fill="none" stroke="#333" stroke-width="1.1"/></svg>
<div class="t" style="left:936.3px;top:513.6px;font-size:11.5px;color:#262626;transform:scaleX(0.885);transform-origin:0 0;"><u style="text-underline-offset:1.5px">O</u>rdenar de menor a mayor</div>
<svg class="a" style="left:913px;top:535px;" width="17" height="16" viewBox="0 0 17 16"><text x="1" y="7.5" font-size="8" fill="#333" font-family="Liberation Sans">Z</text><text x="1" y="15.5" font-size="8" fill="#2b88d8" font-family="Liberation Sans">A</text><path d="M12 1v13M9 11l3 3 3-3" fill="none" stroke="#333" stroke-width="1.1"/></svg>
<div class="t" style="left:936.3px;top:537.9px;font-size:11.5px;color:#262626;transform:scaleX(0.885);transform-origin:0 0;">Ord<u style="text-underline-offset:1.5px">e</u>nar de mayor a menor</div>
<svg class="a" style="left:914px;top:562px;" width="16" height="16" viewBox="0 0 16 16"><g fill="none" stroke="#c0c0c0" stroke-width="1.1"><path d="M0.5 0.5h14l-5.5 6.5v6l-3-2v-4z"/><path d="M10 10.5l5 5M15 10.5l-5 5"/></g></svg>
<div class="t" style="left:936.3px;top:564.8px;font-size:11.5px;color:#a6a6a6;transform:scaleX(0.861);transform-origin:0 0;">Bor<u style="text-underline-offset:1.5px">r</u>ar filtro de "FECHAS"</div>
<svg class="a" style="left:914px;top:589px;" width="16" height="15" viewBox="0 0 16 15"><g fill="none" stroke="#444" stroke-width="1.1"><path d="M0.5 2.5l2 2 3-4M0.5 7l2 2 3-4M0.5 11.5l2 2 3-4"/><path d="M7 3h8M7 7.5h8M7 12h8"/></g></svg>
<div class="t" style="left:936.3px;top:591.1px;font-size:11.5px;color:#262626;transform:scaleX(0.862);transform-origin:0 0;"><u style="text-underline-offset:1.5px">S</u>elección múltiple de "FECHAS"</div>
<svg class="a" style="left:913px;top:615px;" width="17" height="16" viewBox="0 0 17 16"><g fill="none" stroke="#444" stroke-width="1"><rect x="0.5" y="2.5" width="8" height="7"/><rect x="6.5" y="7.5" width="9" height="8"/><path d="M2 4.5h5M2 6.5h3"/></g><path d="M9 4a4 4 0 0 1 6 1M15 2v3h-3" fill="none" stroke="#2b88d8" stroke-width="1.1"/></svg>
<div class="t" style="left:936.3px;top:618.0px;font-size:11.5px;color:#262626;transform:scaleX(0.874);transform-origin:0 0;">Conexiones de<u style="text-underline-offset:1.5px"> </u>informes...</div>
<div class="a" style="left:904.0px;top:638.2px;width:239.8px;height:24.2px;background:#d3d3d3"></div>
<svg class="a" style="left:914px;top:643px;" width="14" height="14" viewBox="0 0 14 14"><path d="M1 1L13 13M13 1L1 13" stroke="#e81123" stroke-width="1.2"/></svg>
<div class="t" style="left:936.3px;top:644.0px;font-size:11.5px;color:#262626;transform:scaleX(0.848);transform-origin:0 0;">Quita<u style="text-underline-offset:1.5px">r</u> "FECHAS"</div>
<svg class="a" style="left:914px;top:668px;" width="16" height="16" viewBox="0 0 16 16"><g fill="none" stroke="#b8b8b8" stroke-width="1" stroke-dasharray="2 1.5"><rect x="0.5" y="0.5" width="15" height="15"/></g><g fill="none" stroke="#b8b8b8" stroke-width="1"><rect x="3.5" y="3.5" width="6" height="6"/><rect x="6.5" y="6.5" width="6" height="6"/></g></svg>
<div class="t" style="left:936.3px;top:671.0px;font-size:11.5px;color:#a6a6a6;transform:scaleX(0.897);transform-origin:0 0;">A<u style="text-underline-offset:1.5px">g</u>rupar</div>
<svg class="a" style="left:1131px;top:672px;" width="6" height="10" viewBox="0 0 6 10"><path d="M0.5 0.5L5 5L0.5 9.5" fill="none" stroke="#999" stroke-width="1.1"/></svg>
<svg class="a" style="left:913px;top:693px;" width="17" height="17" viewBox="0 0 17 17"><rect x="0.5" y="0.5" width="8" height="8" fill="none" stroke="#555"/><rect x="4" y="4" width="9" height="9" fill="#f8c55c" stroke="#e08a1e"/><path d="M16.5 9v7.5H9" fill="none" stroke="#555"/></svg>
<div class="t" style="left:936.3px;top:695.2px;font-size:11.5px;color:#262626;transform:scaleX(0.852);transform-origin:0 0;"><u style="text-underline-offset:1.5px">T</u>raer al frente</div>
<div class="a" style="left:1124.2px;top:694.0px;width:1.0px;height:14.0px;background:#d6d6d6"></div>
<svg class="a" style="left:1131px;top:696px;" width="6" height="10" viewBox="0 0 6 10"><path d="M0.5 0.5L5 5L0.5 9.5" fill="none" stroke="#444" stroke-width="1.1"/></svg>
<svg class="a" style="left:913px;top:717px;" width="17" height="17" viewBox="0 0 17 17"><rect x="0.5" y="0.5" width="7" height="7" fill="none" stroke="#555"/><rect x="3.5" y="3.5" width="8" height="8" fill="#f8c55c" stroke="#e08a1e"/><rect x="8.5" y="8.5" width="7.5" height="7.5" fill="#fff" stroke="#444"/></svg>
<div class="t" style="left:936.3px;top:719.5px;font-size:11.5px;color:#262626;transform:scaleX(0.883);transform-origin:0 0;">Enviar al <u style="text-underline-offset:1.5px">f</u>ondo</div>
<div class="a" style="left:1124.2px;top:718.0px;width:1.0px;height:14.0px;background:#d6d6d6"></div>
<svg class="a" style="left:1131px;top:720px;" width="6" height="10" viewBox="0 0 6 10"><path d="M0.5 0.5L5 5L0.5 9.5" fill="none" stroke="#444" stroke-width="1.1"/></svg>
<div class="t" style="left:936.3px;top:745.8px;font-size:11.5px;color:#262626;transform:scaleX(0.874);transform-origin:0 0;">A<u style="text-underline-offset:1.5px">s</u>ignar macro...</div>
<svg class="a" style="left:913px;top:771px;" width="17" height="15" viewBox="0 0 17 15"><g fill="none" stroke="#555" stroke-width="1"><path d="M12 0.5H0.5v11h8"/><path d="M2 10l3-4 3 3 2-2"/><circle cx="10" cy="3.5" r="1.2"/></g><rect x="9" y="8.5" width="7.5" height="5" fill="none" stroke="#2b88d8" stroke-width="1"/></svg>
<div class="t" style="left:936.3px;top:772.5px;font-size:11.5px;color:#262626;transform:scaleX(0.885);transform-origin:0 0;">Edi<u style="text-underline-offset:1.5px">t</u>ar texto alternativo...</div>
<svg class="a" style="left:913px;top:794px;" width="16" height="16" viewBox="0 0 16 16"><g fill="none" stroke="#2b88d8" stroke-width="1.1"><path d="M3 0.5v14M0.8 3L3 0.5 5.2 3M0.8 12L3 14.5 5.2 12"/></g><rect x="9.5" y="1.5" width="6" height="13" fill="none" stroke="#444"/><path d="M6 1h3M6 15h3" stroke="#444" stroke-dasharray="1 1"/></svg>
<div class="t" style="left:936.3px;top:796.6px;font-size:11.5px;color:#262626;transform:scaleX(0.875);transform-origin:0 0;">Tama<u style="text-underline-offset:1.5px">ñ</u>o y propiedades...</div>
<svg class="a" style="left:916px;top:817px;" width="11" height="17" viewBox="0 0 11 17"><rect x="0.5" y="0.5" width="10" height="15.5" fill="none" stroke="#444"/><path d="M3 4h2M3 8h2M3 12h2M6.5 4h2M6.5 8h2" stroke="#444"/></svg>
<div class="t" style="left:936.3px;top:820.4px;font-size:11.5px;color:#262626;transform:scaleX(0.888);transform-origin:0 0;">Config<u style="text-underline-offset:1.5px">u</u>ración de Segmentación de datos</div>
</body></html>
